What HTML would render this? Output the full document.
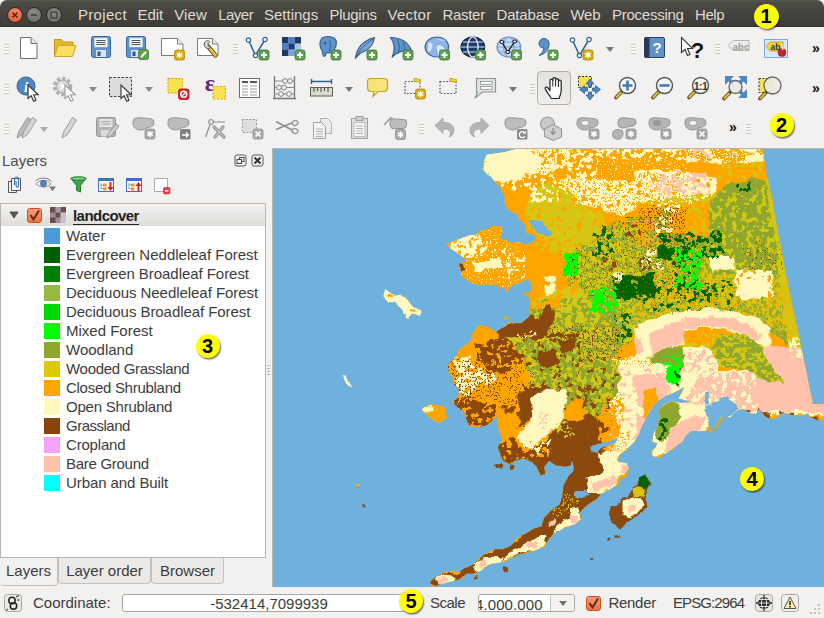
<!DOCTYPE html>
<html><head><meta charset="utf-8"><title>QGIS</title>
<style>
*{box-sizing:border-box}
html,body{margin:0;padding:0}
body{width:824px;height:618px;overflow:hidden;background:#f2f1f0;font-family:"Liberation Sans",sans-serif;font-size:15px;color:#3c3c3c;position:relative}
.abs{position:absolute}
#title{left:0;top:0;width:824px;height:27px;background:linear-gradient(#56554e 0,#4b4a44 3px,#3d3c38 100%);border-radius:7px 7px 0 0;border-bottom:1px solid #33322e}
html{background:#fff}
#title .m{position:absolute;top:5.500px;font-size:15px;line-height:18px;color:#dfdbd2;white-space:nowrap}
.wb{position:absolute;top:6.500px;width:16px;height:16px;border-radius:50%;border:1px solid #2a2925}
.num{position:absolute;border-radius:50%;background:#ffff00;box-shadow:1px 1.500px 1.500px rgba(0,0,0,.55);color:#000;font-weight:bold;text-align:center;font-family:"Liberation Sans",sans-serif}
#tree{left:0;top:203px;width:266px;height:355px;background:#fff;border:1px solid #b8b5b0}
#tree .hd{position:absolute;left:0;top:0;width:264px;height:22px;background:linear-gradient(#f4f3f2,#dedcd9)}
.row{position:absolute;left:43px;height:19px;white-space:nowrap}
.row i{position:absolute;left:0;top:1px;width:16px;height:16px}
.row span{position:absolute;left:22px;top:-1px;line-height:19px;font-size:15px;color:#3c3c3c}
.tab{position:absolute;top:558px;height:26px;border:1px solid #c4c1bc;border-top:none;border-radius:0 0 4px 4px;background:#eceae8;font-size:15px;line-height:25px;color:#3c3c3c;text-align:center}
#map{left:272px;top:148px;width:552px;height:439px;background:#6fb1dd;border-left:1px solid #b9b6b1;border-top:1px solid #b9b6b1;overflow:hidden}
.st{position:absolute;font-size:15px;color:#3c3c3c;white-space:nowrap}
.ic{position:absolute;overflow:visible}
.grip{position:absolute;width:5px;height:11px;background:repeating-linear-gradient(#f2f1f0 0,#f2f1f0 1px,#cfccc7 1px,#cfccc7 2px,#fbfbfa 2px,#fbfbfa 3px)}
.dd{position:absolute;width:0;height:0;border:4px solid transparent;border-top:5px solid #777;border-bottom:none}
.chev{position:absolute;font-size:14px;font-weight:bold;color:#111;line-height:20px}
</style></head>
<body>
<!-- title / menu bar -->
<div id="title" class="abs">
 <div class="wb" style="left:7px;background:radial-gradient(circle at 50% 30%,#f58a66,#df5326)"><svg width="14" height="14" viewBox="0 0 14 14" style="position:absolute;left:0;top:0"><path d="M4.500 4.500l5 5M9.500 4.500l-5 5" stroke="#4a2419" stroke-width="1.500"/></svg></div>
 <div class="wb" style="left:26px;background:radial-gradient(circle at 50% 30%,#8b8a84,#6b6a65)"><svg width="14" height="14" viewBox="0 0 14 14" style="position:absolute;left:0;top:0"><path d="M4 7h6" stroke="#3a3935" stroke-width="1.500"/></svg></div>
 <div class="wb" style="left:46px;background:radial-gradient(circle at 50% 30%,#8b8a84,#6b6a65)"><svg width="14" height="14" viewBox="0 0 14 14" style="position:absolute;left:0;top:0"><rect x="4" y="4" width="6" height="6" fill="none" stroke="#3a3935" stroke-width="1.200"/></svg></div>
 <span class="m" style="left:78px;letter-spacing:0.31px">Project</span>
 <span class="m" style="left:137.4px;letter-spacing:0px">Edit</span>
 <span class="m" style="left:174.2px;letter-spacing:0.15px">View</span>
 <span class="m" style="left:218.2px;letter-spacing:-0.5px">Layer</span>
 <span class="m" style="left:264px;letter-spacing:0px">Settings</span>
 <span class="m" style="left:329.5px;letter-spacing:-0.29px">Plugins</span>
 <span class="m" style="left:387.5px;letter-spacing:0.23px">Vector</span>
 <span class="m" style="left:442.6px;letter-spacing:-0.33px">Raster</span>
 <span class="m" style="left:496.5px;letter-spacing:-0.18px">Database</span>
 <span class="m" style="left:570.5px;letter-spacing:-0.3px">Web</span>
 <span class="m" style="left:611.9px;letter-spacing:-0.24px">Processing</span>
 <span class="m" style="left:695px;letter-spacing:-0.43px">Help</span>
</div>
<div class="num" style="left:753.500px;top:3.500px;width:25px;height:25px;font-size:20px;line-height:25px">1</div>
<div class="num" style="left:769.500px;top:113px;width:24px;height:24px;font-size:20px;line-height:24px">2</div>

<!-- TOOLBARS -->
<div id="toolbars" class="abs" style="left:0;top:0;width:824px;height:148px">
<svg class="ic" style="left:17px;top:36px" width="24" height="24" viewBox="0 0 24 24"><path d="M3.5 1.5h10.5l6 6v15h-16.5z" fill="#fff" stroke="#6e6e6e"/><path d="M14 1.5v6h6" fill="#e9e9e9" stroke="#6e6e6e"/></svg>
<svg class="ic" style="left:53px;top:36px" width="24" height="24" viewBox="0 0 24 24"><path d="M1.5 3.5h7l2 2.5h9.5v13h-18.5z" fill="#e3ba2f" stroke="#c49a17"/><path d="M1.5 20.5l3.5-11h18l-3.5 11z" fill="#f8df62" stroke="#d0a620"/></svg>
<svg class="ic" style="left:89px;top:36px" width="24" height="24" viewBox="0 0 24 24"><rect x="2.5" y="0.5" width="19" height="21" rx="2" fill="#5f91cb" stroke="#3b6ba6"/><rect x="5.5" y="2" width="13" height="9" fill="#f4f4f4" stroke="#c9d3e0" stroke-width=".6"/><path d="M7.5 4.5h9M7.5 6.5h9M7.5 8.5h9" stroke="#555" stroke-width="1"/><rect x="7" y="14" width="10" height="7" fill="#dfe3ea"/><rect x="8.5" y="15.5" width="3" height="4.5" fill="#34568a"/></svg>
<svg class="ic" style="left:125px;top:36px" width="24" height="24" viewBox="0 0 24 24"><g transform="translate(-1,0)"><rect x="2.5" y="0.5" width="19" height="21" rx="2" fill="#5f91cb" stroke="#3b6ba6"/><rect x="5.5" y="2" width="13" height="9" fill="#f4f4f4" stroke="#c9d3e0" stroke-width=".6"/><path d="M7.5 4.5h9M7.5 6.5h9M7.5 8.5h9" stroke="#555" stroke-width="1"/><rect x="7" y="14" width="10" height="7" fill="#dfe3ea"/><rect x="8.5" y="15.5" width="3" height="4.5" fill="#34568a"/></g><g transform="translate(13.5,13.5)"><rect width="10" height="10" rx="2" fill="#5fa052" stroke="#3f7a35" stroke-width=".8"/><path d="M2.5 7.5l5-5" stroke="#fff" stroke-width="2.2"/></g></svg>
<svg class="ic" style="left:160px;top:36px" width="24" height="24" viewBox="0 0 24 24"><path d="M1.5 2.5h16l5.5 5.5v11.5h-21.5z" fill="#fff" stroke="#7a7a7a"/><path d="M17.5 2.5v5.5h5.5" fill="#eee" stroke="#7a7a7a"/><g transform="translate(14.5,14)"><rect x="0" y="0" width="10" height="10" rx="2" fill="#d9ad0e" stroke="#b08a00" stroke-width=".8"/><path d="M5 1.8v6.4M2.2 3.4l5.6 3.2M7.8 3.4l-5.6 3.2" stroke="#fff" stroke-width="1.4"/></g></svg>
<svg class="ic" style="left:196px;top:36px" width="24" height="24" viewBox="0 0 24 24"><path d="M1.5 2.5h15l5.5 5.5v11.5h-20.5z" fill="#fff" stroke="#7a7a7a"/><path d="M16.5 2.5v5.5h5.5" fill="#eee" stroke="#7a7a7a"/><path d="M10 8l9.5 11.5" stroke="#7a5a18" stroke-width="4.4" stroke-linecap="round"/><path d="M10 8l9.5 11.5" stroke="#e9c04a" stroke-width="2.6" stroke-linecap="round"/><path d="M12.5 4.5a4 4 0 1 0 2.5 6.8l-2.6-1 -.6-2.6 2.2-1.9a4 4 0 0 0-1.5-1.3z" fill="#d8d8d8" stroke="#5a5a5a" stroke-width=".9"/></svg>
<svg class="ic" style="left:245px;top:36px" width="24" height="24" viewBox="0 0 24 24"><path d="M3.5 4L10.5 19.5L20 3.5" fill="none" stroke="#2f5f8f" stroke-width="1.5"/><circle cx="3.5" cy="4" r="2.2" fill="#fff" stroke="#2f5f8f" stroke-width="1.2"/><circle cx="20" cy="3.5" r="2.2" fill="#fff" stroke="#2f5f8f" stroke-width="1.2"/><circle cx="10.5" cy="19.5" r="2.2" fill="#fff" stroke="#2f5f8f" stroke-width="1.2"/><g transform="translate(14,14)"><rect x="0" y="0" width="10" height="10" rx="2" fill="#5fa052" stroke="#3f7a35" stroke-width=".8"/><path d="M5 2v6M2 5h6" stroke="#fff" stroke-width="2"/></g></svg>
<svg class="ic" style="left:281px;top:36px" width="24" height="24" viewBox="0 0 24 24"><rect x="1" y="1" width="19" height="19" fill="#a8c4e6"/><rect x="1" y="1" width="6.4" height="6.4" fill="#1d3b69"/><rect x="13.6" y="1" width="6.4" height="6.4" fill="#1d3b69"/><rect x="7.4" y="7.4" width="6.2" height="6.2" fill="#1d3b69"/><rect x="7.4" y="1" width="6.2" height="6.4" fill="#4f7fc0"/><rect x="1" y="7.4" width="6.4" height="6.2" fill="#4f7fc0"/><rect x="1" y="13.6" width="6.4" height="6.4" fill="#1d3b69"/><rect x="7.4" y="13.6" width="6.2" height="6.4" fill="#7fa3d6"/><g transform="translate(14,14)"><rect x="0" y="0" width="10" height="10" rx="2" fill="#5fa052" stroke="#3f7a35" stroke-width=".8"/><path d="M5 2v6M2 5h6" stroke="#fff" stroke-width="2"/></g></svg>
<svg class="ic" style="left:317px;top:36px" width="24" height="24" viewBox="0 0 24 24"><path d="M5 2c3-2 9-2 12 0c3 2 3 7 1 10c-1 2-1 5 .5 7c-2 1.500-4 0-4.500-3c-1.500 1-3.500 1-5 .5c0 2-.5 3.500-2 4c-1.500-1-1.500-4-2-6c-2.500-3-3-9 0-12.500z" fill="#5f91cb" stroke="#2f5f8f" stroke-width="1.1"/><circle cx="8" cy="7" r="1" fill="#1d3b69"/><path d="M12 4c2 3 2 7 0 11" fill="none" stroke="#2f5f8f" stroke-width=".9"/><g transform="translate(14,14)"><rect x="0" y="0" width="10" height="10" rx="2" fill="#5fa052" stroke="#3f7a35" stroke-width=".8"/><path d="M5 2v6M2 5h6" stroke="#fff" stroke-width="2"/></g></svg>
<svg class="ic" style="left:353px;top:36px" width="24" height="24" viewBox="0 0 24 24"><path d="M2.500 22c1-8 6-17 19-20.500c-1 7-6 13-14 15.500z" fill="#7aa3d6" stroke="#2f5f8f" stroke-width="1.1"/><path d="M3 22c3-8 9-14 17-19" fill="none" stroke="#2f5f8f" stroke-width="1"/><g transform="translate(14,14)"><rect x="0" y="0" width="10" height="10" rx="2" fill="#5fa052" stroke="#3f7a35" stroke-width=".8"/><path d="M5 2v6M2 5h6" stroke="#fff" stroke-width="2"/></g></svg>
<svg class="ic" style="left:389px;top:36px" width="24" height="24" viewBox="0 0 24 24"><path d="M1.500 1.500c10 0 18 5 21.500 14c-6-2-14-1-20 6c3-7 3-14-1.500-20z" fill="#5f91cb" stroke="#2f5f8f" stroke-width="1.1"/><path d="M8 3c3 5 3 10 1 15M14 5.500c2 4 2 7 1.500 10.500" fill="none" stroke="#2f5f8f" stroke-width=".9"/><g transform="translate(14,14)"><rect x="0" y="0" width="10" height="10" rx="2" fill="#5fa052" stroke="#3f7a35" stroke-width=".8"/><path d="M5 2v6M2 5h6" stroke="#fff" stroke-width="2"/></g></svg>
<svg class="ic" style="left:425px;top:36px" width="24" height="24" viewBox="0 0 24 24"><g transform="translate(-1,0) scale(1.17,1)"><circle cx="11" cy="11" r="10" fill="#8db4e3" stroke="#3b6ba6" stroke-width="1.2"/><path d="M4 6c3 1 4 3 3 6s-2 4-4 3M11 3c3 2 5 2 8 1M12 9c3 0 5 2 6 5s-2 5-5 5c-2-2-1-4-2-6s0-3 1-4z" fill="#d5e4f6" stroke="none"/></g><g transform="translate(14.5,14)"><rect x="0" y="0" width="10" height="10" rx="2" fill="#5fa052" stroke="#3f7a35" stroke-width=".8"/><path d="M5 2v6M2 5h6" stroke="#fff" stroke-width="2"/></g></svg>
<svg class="ic" style="left:461px;top:36px" width="24" height="24" viewBox="0 0 24 24"><g transform="translate(-1,0) scale(1.17,1)"><circle cx="11" cy="11" r="10" fill="#1d3b69" stroke="#13294a" stroke-width="1.2"/><ellipse cx="11" cy="11" rx="4.500" ry="10" fill="none" stroke="#dfe8f4" stroke-width="1.2"/><path d="M1 11h20M2.500 6h17M2.500 16h17" stroke="#dfe8f4" stroke-width="1.200"/></g><g transform="translate(14.5,14)"><rect x="0" y="0" width="10" height="10" rx="2" fill="#5fa052" stroke="#3f7a35" stroke-width=".8"/><path d="M5 2v6M2 5h6" stroke="#fff" stroke-width="2"/></g></svg>
<svg class="ic" style="left:497px;top:36px" width="24" height="24" viewBox="0 0 24 24"><g transform="translate(-1,0) scale(1.17,1)"><circle cx="11" cy="11" r="10" fill="#c3d8f1" stroke="#5f91cb" stroke-width="1.2"/><ellipse cx="11" cy="11" rx="4.500" ry="10" fill="none" stroke="#7aa3d6" stroke-width="1"/><path d="M1 11h20M2.500 6h17M2.500 16h17" stroke="#7aa3d6" stroke-width="1"/><path d="M5 6l5 10l6-10.500" fill="none" stroke="#222" stroke-width="1.200"/><circle cx="5" cy="6" r="1.600" fill="#fff" stroke="#222"/><circle cx="16" cy="5.500" r="1.600" fill="#fff" stroke="#222"/><circle cx="10" cy="16" r="1.600" fill="#fff" stroke="#222"/></g><g transform="translate(14.5,14)"><rect x="0" y="0" width="10" height="10" rx="2" fill="#5fa052" stroke="#3f7a35" stroke-width=".8"/><path d="M5 2v6M2 5h6" stroke="#fff" stroke-width="2"/></g></svg>
<svg class="ic" style="left:535px;top:36px" width="24" height="24" viewBox="0 0 24 24"><path d="M9 2.500a5 5 0 0 1 5 5.500c0 6-4 10-10 11.500c3-2 5-5 5-7.500a5 5 0 0 1-5-4.500a5 5 0 0 1 5-5z" fill="#5f91cb" stroke="#2f5f8f" stroke-width="1"/><g transform="translate(13,14)"><rect x="0" y="0" width="10" height="10" rx="2" fill="#5fa052" stroke="#3f7a35" stroke-width=".8"/><path d="M5 2v6M2 5h6" stroke="#fff" stroke-width="2"/></g></svg>
<svg class="ic" style="left:569px;top:36px" width="24" height="24" viewBox="0 0 24 24"><path d="M3.5 4L10.5 19.5L20 3.5" fill="none" stroke="#2f5f8f" stroke-width="1.5"/><circle cx="3.5" cy="4" r="2.2" fill="#fff" stroke="#2f5f8f" stroke-width="1.2"/><circle cx="20" cy="3.5" r="2.2" fill="#fff" stroke="#2f5f8f" stroke-width="1.2"/><circle cx="10.5" cy="19.5" r="2.2" fill="#fff" stroke="#2f5f8f" stroke-width="1.2"/><g transform="translate(14,14)"><rect x="0" y="0" width="10" height="10" rx="2" fill="#d9ad0e" stroke="#b08a00" stroke-width=".8"/><path d="M5 1.8v6.4M2.2 3.4l5.6 3.2M7.8 3.4l-5.6 3.2" stroke="#fff" stroke-width="1.4"/></g></svg>
<svg class="ic" style="left:643px;top:36px" width="24" height="24" viewBox="0 0 24 24"><rect x="1.500" y="1.500" width="20" height="20" rx="1.500" fill="#5f91cb" stroke="#2c4468"/><rect x="1.500" y="1.500" width="5" height="20" fill="#263a57"/><text x="14" y="17" style="font-family:'Liberation Sans',sans-serif" font-size="15" font-weight="bold" fill="#fff" text-anchor="middle">?</text></svg>
<svg class="ic" style="left:679px;top:36px" width="24" height="24" viewBox="0 0 24 24"><path d="M2.500 1.500v15l3.500-3 2.500 6 2.500-1-2.500-6h5z" fill="#fff" stroke="#333" stroke-width="1.1"/><text x="18.500" y="21.500" style="font-family:'Liberation Sans',sans-serif" font-size="22" font-weight="bold" fill="#111" text-anchor="middle">?</text></svg>
<svg class="ic" style="left:727px;top:36px" width="24" height="24" viewBox="0 0 24 24"><path d="M1 9.500l5-5h16v10h-16z" fill="#ececec" stroke="#b5b5b5"/><text x="14" y="13.500" style="font-family:'Liberation Sans',sans-serif" font-size="9.500" font-weight="bold" fill="#9a9a9a" text-anchor="middle">abc</text></svg>
<svg class="ic" style="left:764px;top:39px" width="24" height="20" viewBox="0 0 24 20"><rect x=".5" y=".5" width="23" height="18" fill="#dbe8fa" stroke="#7da7e3"/><path d="M2 7.500l4-4.500h13v9h-13z" fill="#f2d53c" stroke="#b99a10" stroke-width=".8"/><text x="11.500" y="11" style="font-family:'Liberation Sans',sans-serif" font-size="8.500" font-weight="bold" fill="#333" text-anchor="middle">ab</text><circle cx="18" cy="13.500" r="4" fill="#c4262e" stroke="#8e161c" stroke-width=".6"/><path d="M17 5c1.500 0 2 4 1.500 6" stroke="#ddd" stroke-width="1.600" fill="none"/></svg>
<svg class="ic" style="left:16px;top:76px" width="26" height="26" viewBox="0 0 26 26"><circle cx="10" cy="10" r="9" fill="#4f86c6" stroke="#2f5f8f"/><text x="10" y="15.500" style="font-family:'Liberation Serif',serif" font-style="italic" font-weight="bold" font-size="15" fill="#fff" text-anchor="middle">i</text><path d="M12 9v13.500l3.200-2.800 2.400 5.500 2.400-1-2.400-5.400h4.600z" fill="#fff" stroke="#333" stroke-width="1.100"/></svg>
<svg class="ic" style="left:52px;top:76px" width="26" height="26" viewBox="0 0 26 26"><circle cx="10.500" cy="10.500" r="8" fill="none" stroke="#b0b0b0" stroke-width="3.500" stroke-dasharray="3.200 2.100"/><circle cx="10.500" cy="10.500" r="6.500" fill="#d9d9d9" stroke="#a0a0a0"/><path d="M8.500 7v7l6-3.500z" fill="#fff"/><path d="M13 10v13.500l3.200-2.800 2.400 5.500 2.400-1-2.400-5.400h4.600z" fill="#fff" stroke="#9a9a9a" stroke-width="1.100" transform="translate(0,-1)"/></svg>
<svg class="ic" style="left:108px;top:76px" width="26" height="26" viewBox="0 0 26 26"><rect x="1.500" y="1.500" width="22" height="19" fill="#dcdcdc" stroke="#444" stroke-dasharray="2.500 1.500"/><path d="M13 9v13.500l3.200-2.800 2.400 5.500 2.400-1-2.400-5.400h4.600z" fill="#fff" stroke="#333" stroke-width="1.100"/></svg>
<svg class="ic" style="left:166px;top:76px" width="24" height="24" viewBox="0 0 24 24"><rect x="2" y="2.500" width="14.500" height="14.500" fill="#f7e24f" stroke="#c9a800" stroke-dasharray="2 1.500"/><rect x="12.500" y="13" width="10.500" height="10.500" rx="2" fill="#d9262c" stroke="#a3161b" stroke-width=".8"/><circle cx="17.750" cy="18.250" r="3" fill="none" stroke="#fff" stroke-width="1.400"/><path d="M15.800 20.200l3.900-3.900" stroke="#fff" stroke-width="1.400"/></svg>
<svg class="ic" style="left:203px;top:76px" width="24" height="24" viewBox="0 0 24 24"><text x="7" y="15" style="font-family:'Liberation Serif',serif" font-size="24" font-weight="bold" fill="#5a2a82" text-anchor="middle">ε</text><rect x="10" y="10.500" width="12.500" height="12.500" fill="#f7e24f" stroke="#c9a800" stroke-dasharray="2 1.500"/></svg>
<svg class="ic" style="left:238px;top:76px" width="24" height="24" viewBox="0 0 24 24"><rect x="1.500" y="2.500" width="20" height="19" fill="#fff" stroke="#6e6e6e"/><path d="M4 6h6M12 6h7" stroke="#555" stroke-width="2"/><path d="M4 10h6M12 10h7M4 13h6M12 13h7M4 16h6M12 16h7M4 19h6M12 19h7" stroke="#999" stroke-width="1"/></svg>
<svg class="ic" style="left:272px;top:76px" width="25" height="24" viewBox="0 0 25 24"><path d="M2.500 0v22M22.500 0v22" stroke="#777" stroke-width="1.300"/><path d="M2.500 5h20M2.500 11.500h20M2.500 18h20" stroke="#888" stroke-width="1"/><path d="M1 22.500h23" stroke="#777" stroke-width="1.500"/><g fill="#f2f2f2" stroke="#777" stroke-width=".9"><circle cx="13" cy="5" r="2.400"/><circle cx="18" cy="5" r="2.400"/><circle cx="7" cy="11.500" r="2.400"/><circle cx="12" cy="11.500" r="2.400"/><circle cx="9" cy="18" r="2.400"/><circle cx="17" cy="18" r="2.400"/></g></svg>
<svg class="ic" style="left:309px;top:76px" width="25" height="24" viewBox="0 0 25 24"><path d="M2.500 3v5M22.500 3v5M2.500 5.500h20" stroke="#2f5f8f" stroke-width="1.400"/><rect x="1.500" y="11.500" width="22" height="8.500" fill="#d7dccf" stroke="#5c6152"/><path d="M5 12v4M8.500 12v3M12 12v4M15.500 12v3M19 12v4" stroke="#444" stroke-width="1"/></svg>
<svg class="ic" style="left:366px;top:76px" width="24" height="24" viewBox="0 0 24 24"><path d="M5 2.500h13a3.500 3.500 0 0 1 3.500 3.500v6a3.500 3.500 0 0 1-3.500 3.500h-6l-5 5 .8-5h-2.800a3.500 3.500 0 0 1-3.500-3.500v-6a3.500 3.500 0 0 1 3.500-3.500z" fill="#f8e57a" stroke="#c9a21c" stroke-width="1.200"/></svg>
<svg class="ic" style="left:403px;top:76px" width="24" height="24" viewBox="0 0 24 24"><rect x="2" y="5.500" width="15" height="12" fill="none" stroke="#555" stroke-dasharray="1.600 1.600" stroke-width="1.200"/><path d="M11 5.500v-3h3l1 1h2.500v2.500z" fill="#f2d53c" stroke="#b99a10" stroke-width=".8"/><g transform="translate(12.5,13)"><rect x="0" y="0" width="10" height="10" rx="2" fill="#d9ad0e" stroke="#b08a00" stroke-width=".8"/><path d="M5 1.8v6.4M2.2 3.4l5.6 3.2M7.8 3.4l-5.6 3.2" stroke="#fff" stroke-width="1.4"/></g></svg>
<svg class="ic" style="left:438px;top:76px" width="24" height="24" viewBox="0 0 24 24"><rect x="2" y="5.500" width="16" height="12" fill="none" stroke="#555" stroke-dasharray="1.600 1.600" stroke-width="1.200"/><path d="M12 5.500v-3h3l1 1h2.500v2.500z" fill="#f2d53c" stroke="#b99a10" stroke-width=".8"/></svg>
<svg class="ic" style="left:472px;top:76px" width="26" height="24" viewBox="0 0 26 24"><path d="M4.500 2.500h19v13.500h-13l-7.500 6 2.500-6h-1z" fill="#dfe3e3" stroke="#8f9595" stroke-width="1.200"/><rect x="8.500" y="5.500" width="11.500" height="2.800" fill="#fff" stroke="#8f9595" stroke-width=".8"/><rect x="8.500" y="10.500" width="11.500" height="2.800" fill="#fff" stroke="#8f9595" stroke-width=".8"/></svg>
<div class="ic" style="left:537px;top:71px;width:34px;height:34px;border:1px solid #b3b0ab;border-radius:4px;background:linear-gradient(#e4e2df,#efeeec)"></div>
<svg class="ic" style="left:543px;top:76px" width="22" height="24" viewBox="0 0 22 24"><path d="M7 12v-7.500a1.400 1.400 0 0 1 2.800 0v-1.500a1.400 1.400 0 0 1 2.800 0v1a1.400 1.400 0 0 1 2.800 0v1.500a1.400 1.400 0 0 1 2.800 0v9c0 4-1.500 5-2 8h-8c-.5-3-5-6-6-10c-.3-1.500 1.500-2 2.500-.8l2.300 3z" fill="#fff" stroke="#222" stroke-width="1.200" stroke-linejoin="round"/><path d="M9.800 4.500v6M12.600 4v6.500M15.400 5.500v5.500" stroke="#222" stroke-width="1"/></svg>
<svg class="ic" style="left:577px;top:75px" width="26" height="26" viewBox="0 0 26 26"><rect x="1.500" y="1.500" width="13" height="11" fill="#f7e24f" stroke="#333" stroke-dasharray="2 1.500"/><g fill="#4f86c6" stroke="#2f5f8f" stroke-width=".8"><path d="M13 4l4 5h-2.500v3h-3v-3h-2.500z"/><path d="M13 25l4-5h-2.500v-3h-3v3h-2.500z"/><path d="M2.500 14.500l5-4v2.500h3v3h-3v2.500z"/><path d="M23.500 14.500l-5-4v2.500h-3v3h3v2.500z"/></g></svg>
<svg class="ic" style="left:613px;top:76px" width="24" height="24" viewBox="0 0 24 24"><path d="M3 21.500l6-6" stroke="#3a3a3a" stroke-width="3.600" stroke-linecap="round"/><path d="M3.300 21.200l4.700-4.700" stroke="#f0c020" stroke-width="2" stroke-linecap="round"/><circle cx="14.500" cy="9.500" r="8" fill="#f4f4f2" stroke="#555" stroke-width="1.400"/><path d="M14.500 4.500v10M9.500 9.500h10" stroke="#3f7ac2" stroke-width="2.600"/></svg>
<svg class="ic" style="left:650px;top:76px" width="24" height="24" viewBox="0 0 24 24"><path d="M3 21.500l6-6" stroke="#3a3a3a" stroke-width="3.600" stroke-linecap="round"/><path d="M3.300 21.200l4.700-4.700" stroke="#f0c020" stroke-width="2" stroke-linecap="round"/><circle cx="14.500" cy="9.500" r="8" fill="#f4f4f2" stroke="#555" stroke-width="1.400"/><path d="M9.500 9.500h10" stroke="#3f7ac2" stroke-width="2.600"/></svg>
<svg class="ic" style="left:686px;top:76px" width="24" height="24" viewBox="0 0 24 24"><path d="M3 21.500l6-6" stroke="#3a3a3a" stroke-width="3.600" stroke-linecap="round"/><path d="M3.300 21.200l4.700-4.700" stroke="#f0c020" stroke-width="2" stroke-linecap="round"/><circle cx="14.500" cy="9.500" r="8" fill="#f4f4f2" stroke="#555" stroke-width="1.400"/><text x="14.500" y="13.500" style="font-family:'Liberation Sans',sans-serif" font-size="10.500" font-weight="bold" fill="#333" text-anchor="middle" letter-spacing="-0.6">1:1</text></svg>
<svg class="ic" style="left:721px;top:75px" width="27" height="26" viewBox="0 0 27 26"><g fill="#4f86c6"><path d="M4 1h9l-3 3 3.500 3.500-2.500 2.500-3.500-3.500-3.500 3.500z"/><path d="M26 1h-9l3 3-3.500 3.500 2.500 2.500 3.500-3.500 3.500 3.500z"/><path d="M26 23h-9l3-3-3.500-3.500 2.500-2.500 3.500 3.500 3.500-3.500z"/></g><path d="M3 23.500l6-6" stroke="#3a3a3a" stroke-width="3.600" stroke-linecap="round"/><path d="M3.300 23.200l4.700-4.700" stroke="#f0c020" stroke-width="2" stroke-linecap="round"/><circle cx="14.500" cy="12" r="6.500" fill="#e9e9e7" fill-opacity=".9" stroke="#666" stroke-width="1.300"/></svg>
<svg class="ic" style="left:757px;top:75px" width="26" height="26" viewBox="0 0 26 26"><rect x="2" y="3.500" width="13" height="14" fill="#f7e24f" stroke="#333" stroke-dasharray="2 1.500"/><path d="M3 23.500l6-6" stroke="#3a3a3a" stroke-width="3.600" stroke-linecap="round"/><path d="M3.300 23.200l4.700-4.700" stroke="#f0c020" stroke-width="2" stroke-linecap="round"/><circle cx="15.500" cy="10.500" r="8.500" fill="#ecebe2" fill-opacity=".9" stroke="#666" stroke-width="1.300"/></svg>
<svg class="ic" style="left:16px;top:116px" width="24" height="24" viewBox="0 0 24 24"><path d="M1 22l1.500-6 9-14.500 4 2.500-9 14.500z" fill="#b9b9b9" stroke="#9c9c9c" stroke-width="1"/><path d="M6 22l1.500-6 9-14.500 4 2.500-9 14.500z" fill="#d6d6d6" stroke="#9c9c9c" stroke-width="1"/></svg>
<svg class="ic" style="left:61px;top:116px" width="18" height="24" viewBox="0 0 18 24"><path d="M1 22l1.500-6 9-14.500 4 2.500-9 14.500z" fill="#d6d6d6" stroke="#9c9c9c" stroke-width="1"/></svg>
<svg class="ic" style="left:95px;top:116px" width="25" height="24" viewBox="0 0 25 24"><rect x="1.500" y="1.500" width="19" height="19" rx="2" fill="#b5b5b5" stroke="#959595"/><rect x="4.500" y="3" width="13" height="8" fill="#e2e2e2"/><path d="M6.500 5.500h9M6.500 8h9" stroke="#a5a5a5"/><rect x="6" y="14" width="10" height="6.500" fill="#dadada"/><path d="M12 22l1-4 8-10 3 2-8 10z" fill="#cfcfcf" stroke="#8c8c8c" stroke-width=".9"/></svg>
<svg class="ic" style="left:132px;top:116px" width="24" height="24" viewBox="0 0 24 24"><path d="M3 2.500c4-2 9 0 13 0s6 1 6 4-3 5-6 5-4 3-8 2.500-7-3-7-6 0-4.500 2-5.500z" fill="#bdbdbd" stroke="#9a9a9a" stroke-width="1.100"/><g transform="translate(13,13)"><rect x="0" y="0" width="10" height="10" rx="2" fill="#a9a9a9" stroke="#8f8f8f" stroke-width=".8"/><path d="M5 1.8v6.4M2.2 3.4l5.6 3.2M7.8 3.4l-5.6 3.2" stroke="#fff" stroke-width="1.4"/></g></svg>
<svg class="ic" style="left:167px;top:116px" width="25" height="24" viewBox="0 0 25 24"><path d="M3 2.500c4-2 9 0 13 0s6 1 6 4-3 5-6 5-4 3-8 2.500-7-3-7-6 0-4.500 2-5.500z" fill="#bdbdbd" stroke="#9a9a9a" stroke-width="1.100"/><g transform="translate(13,13)"><rect width="10.500" height="10.500" rx="1.500" fill="#7f7f7f"/><path d="M2 5.200h4v-2.500l3.300 3.300-3.300 3.300v-2.500h-4z" fill="#fff"/></g></svg>
<svg class="ic" style="left:204px;top:116px" width="24" height="24" viewBox="0 0 24 24"><path d="M1.500 21l5.500-15h14" fill="none" stroke="#8a8a8a" stroke-width="1.200"/><circle cx="7" cy="6" r="2.500" fill="#ddd" stroke="#8a8a8a"/><path d="M10 11l10 10M19 11l-8 10" stroke="#8c8c8c" stroke-width="3.200" stroke-linecap="round"/><path d="M10 11l10 10M19 11l-8 10" stroke="#c4c4c4" stroke-width="1.400" stroke-linecap="round"/></svg>
<svg class="ic" style="left:241px;top:116px" width="24" height="24" viewBox="0 0 24 24"><rect x="1.500" y="3.500" width="14" height="13" fill="#dedede" stroke="#9a9a9a" stroke-dasharray="2 1.500"/><g transform="translate(12,13)"><rect width="10" height="10" rx="2" fill="#a9a9a9" stroke="#8f8f8f" stroke-width=".8"/><path d="M2.5 2.5l5 5M7.5 2.5l-5 5" stroke="#fff" stroke-width="1.6"/></g></svg>
<svg class="ic" style="left:275px;top:116px" width="25" height="24" viewBox="0 0 25 24"><path d="M1 5.500l17 9M1 13.500l17-7" stroke="#8f8f8f" stroke-width="1.600"/><ellipse cx="20" cy="7" rx="3" ry="2.300" fill="none" stroke="#9a9a9a" stroke-width="1.500" transform="rotate(-25 20 7)"/><ellipse cx="20" cy="15" rx="3" ry="2.300" fill="none" stroke="#9a9a9a" stroke-width="1.500" transform="rotate(25 20 15)"/></svg>
<svg class="ic" style="left:312px;top:116px" width="22" height="24" viewBox="0 0 22 24"><path d="M8.500 2.500h7l4 4v11h-11z" fill="#ececec" stroke="#b0b0b0"/><path d="M1.500 6.500h8l4 4v12h-12z" fill="#f4f4f4" stroke="#a0a0a0"/><path d="M4 13h7M4 15.500h7M4 18h7M4 20.500h7" stroke="#b0b0b0"/></svg>
<svg class="ic" style="left:350px;top:116px" width="20" height="24" viewBox="0 0 20 24"><rect x="1.500" y="2.500" width="16" height="20" fill="#e0e0e0" stroke="#a0a0a0"/><rect x="6" y=".5" width="7" height="4" fill="#cfcfcf" stroke="#a0a0a0"/><rect x="4" y="6.500" width="11" height="14" fill="#f6f6f6" stroke="#b0b0b0" stroke-width=".8"/><path d="M6 10h7M6 12.500h7M6 15h7M6 17.500h7" stroke="#b0b0b0"/></svg>
<svg class="ic" style="left:383px;top:116px" width="26" height="24" viewBox="0 0 26 24"><path d="M1 9l7-7.500" stroke="#8a8a8a" stroke-width="1.100"/><path d="M8 2c4 2 8 1 13 1.500c3 0 3 4 2 7s-5 2-8 2-5 1-7-1-1-6 0-9.500z" fill="#bdbdbd" stroke="#9a9a9a" stroke-width="1.100"/><g transform="translate(12.5,13.5)"><rect x="0" y="0" width="10" height="10" rx="2" fill="#a9a9a9" stroke="#8f8f8f" stroke-width=".8"/><path d="M5 1.8v6.4M2.2 3.4l5.6 3.2M7.8 3.4l-5.6 3.2" stroke="#fff" stroke-width="1.4"/></g></svg>
<svg class="ic" style="left:433px;top:116px" width="22" height="24" viewBox="0 0 22 24"><path d="M2 9.500l8-7.500v4.500c7-.5 11 3 11 8 0 3-2 5.500-5 6.500 2.500-3 2.500-8.500-6-8v4.500z" fill="#b5b5b5" stroke="#a0a0a0" stroke-width=".8"/></svg>
<svg class="ic" style="left:469px;top:116px" width="22" height="24" viewBox="0 0 22 24"><path d="M20 9.500l-8-7.500v4.500c-7-.5-11 3-11 8 0 3 2 5.500 5 6.500-2.500-3-2.500-8.500 6-8v4.500z" fill="#b5b5b5" stroke="#a0a0a0" stroke-width=".8"/></svg>
<svg class="ic" style="left:504px;top:116px" width="25" height="24" viewBox="0 0 25 24"><path d="M3 2.500c4-2 9 0 13 0s6 1 6 4-3 5-6 5-4 3-8 2.500-7-3-7-6 0-4.500 2-5.500z" fill="#bdbdbd" stroke="#9a9a9a" stroke-width="1.100"/><g transform="translate(13,13)"><rect width="10.500" height="10.500" rx="1.500" fill="#8a8a8a"/><path d="M7.800 4a3 3 0 1 0 .2 3" fill="none" stroke="#fff" stroke-width="1.300"/><path d="M8.800 1.800v3h-3z" fill="#fff"/></g></svg>
<svg class="ic" style="left:539px;top:116px" width="25" height="25" viewBox="0 0 25 25"><circle cx="8.500" cy="8" r="7" fill="#c9c9c9" stroke="#9a9a9a" stroke-width="1.100"/><path d="M14 8.500l8.500 4.500v8l-8.500 3.500-8.500-4v-7.500z" fill="#cfcfcf" stroke="#9a9a9a" stroke-width="1.100"/><path d="M14 12v6M11.500 15.500l2.500 2.800 2.500-2.800" fill="none" stroke="#8a8a8a" stroke-width="1.200"/></svg>
<svg class="ic" style="left:576px;top:116px" width="24" height="24" viewBox="0 0 24 24"><path d="M3 2.500c4-2 9 0 13 0s6 1 6 4-3 5-6 5-4 3-8 2.500-7-3-7-6 0-4.500 2-5.500z" fill="#b5b5b5" stroke="#9a9a9a" stroke-width="1.100"/><ellipse cx="9" cy="7" rx="4" ry="2.800" fill="#f2f1f0" stroke="#9a9a9a" stroke-width=".9"/><g transform="translate(13,13)"><rect x="0" y="0" width="10" height="10" rx="2" fill="#a9a9a9" stroke="#8f8f8f" stroke-width=".8"/><path d="M5 1.8v6.4M2.2 3.4l5.6 3.2M7.8 3.4l-5.6 3.2" stroke="#fff" stroke-width="1.4"/></g></svg>
<svg class="ic" style="left:612px;top:116px" width="26" height="24" viewBox="0 0 26 24"><path d="M8 2.500c4-1.500 8 0 11 0s5 1 5 3.500-3 4.500-6 4.500-5 2-8 1.500-4-3-4-5 .5-3.500 2-4.500z" fill="#b5b5b5" stroke="#9a9a9a" stroke-width="1.100"/><path d="M2 15c2-2 6-2 8 0s1 5-1 7-6 1.500-7.500-.5 -1-5 .5-6.500z" fill="#b5b5b5" stroke="#9a9a9a" stroke-width="1.100"/><g transform="translate(14,13)"><rect x="0" y="0" width="10" height="10" rx="2" fill="#a9a9a9" stroke="#8f8f8f" stroke-width=".8"/><path d="M5 1.8v6.4M2.2 3.4l5.6 3.2M7.8 3.4l-5.6 3.2" stroke="#fff" stroke-width="1.4"/></g></svg>
<svg class="ic" style="left:648px;top:116px" width="24" height="24" viewBox="0 0 24 24"><path d="M3 2.500c4-2 9 0 13 0s6 1 6 4-3 5-6 5-4 3-8 2.500-7-3-7-6 0-4.500 2-5.500z" fill="#b5b5b5" stroke="#9a9a9a" stroke-width="1.100"/><ellipse cx="9" cy="7" rx="4" ry="2.800" fill="#999" stroke="#9a9a9a" stroke-width=".9"/><g transform="translate(13,13)"><rect x="0" y="0" width="10" height="10" rx="2" fill="#a9a9a9" stroke="#8f8f8f" stroke-width=".8"/><path d="M5 1.8v6.4M2.2 3.4l5.6 3.2M7.8 3.4l-5.6 3.2" stroke="#fff" stroke-width="1.4"/></g></svg>
<svg class="ic" style="left:684px;top:116px" width="24" height="24" viewBox="0 0 24 24"><path d="M3 2.500c4-2 9 0 13 0s6 1 6 4-3 5-6 5-4 3-8 2.500-7-3-7-6 0-4.500 2-5.500z" fill="#b5b5b5" stroke="#9a9a9a" stroke-width="1.100"/><ellipse cx="9" cy="7" rx="4" ry="2.800" fill="#f2f1f0" stroke="#9a9a9a" stroke-width=".9"/><g transform="translate(13,13)"><rect width="10" height="10" rx="2" fill="#a9a9a9" stroke="#8f8f8f" stroke-width=".8"/><path d="M2.5 2.5l5 5M7.5 2.5l-5 5" stroke="#fff" stroke-width="1.6"/></g></svg>
<div class="grip" style="left:4px;top:43px"></div>
<div class="grip" style="left:233px;top:43px"></div>
<div class="grip" style="left:631px;top:43px"></div>
<div class="grip" style="left:715px;top:43px"></div>
<div class="grip" style="left:4px;top:83px"></div>
<div class="grip" style="left:530px;top:83px"></div>
<div class="grip" style="left:4px;top:123px"></div>
<div class="grip" style="left:419px;top:123px"></div>
<div class="grip" style="left:746px;top:123px"></div>
<div class="dd" style="left:606px;top:47px;border-top-color:#777"></div>
<div class="dd" style="left:89px;top:87px;border-top-color:#8a8a8a"></div>
<div class="dd" style="left:145px;top:87px;border-top-color:#8a8a8a"></div>
<div class="dd" style="left:345px;top:87px;border-top-color:#777"></div>
<div class="dd" style="left:509px;top:87px;border-top-color:#777"></div>
<div class="dd" style="left:40px;top:127px;border-top-color:#aaa"></div>
<div class="chev" style="left:812px;top:38px">»</div>
<div class="chev" style="left:812px;top:78px">»</div>
<div class="chev" style="left:729px;top:117px">»</div>
</div><!--TBEND-->

<!-- layers panel -->
<div class="st" style="left:2px;top:152px;font-size:15px;color:#4c4c4c">Layers</div>
<svg class="abs" style="left:234px;top:154px" width="31" height="13" viewBox="0 0 31 13"><rect x="1" y="1" width="11" height="11" rx="2" fill="#f7f6f5" stroke="#555"/><rect x="5.500" y="3.500" width="4.500" height="4" fill="none" stroke="#444" stroke-width="1"/><rect x="3" y="5.500" width="4.500" height="4" fill="#f7f6f5" stroke="#444" stroke-width="1"/><rect x="18" y="1" width="11" height="11" rx="2" fill="#f7f6f5" stroke="#555"/><path d="M20.500 3.500l6 6M26.500 3.500l-6 6" stroke="#333" stroke-width="2"/></svg>
<svg class="abs" style="left:6px;top:175px" width="170" height="20" viewBox="0 0 170 20">
 <path d="M2.500 6.500h8v11h-8z" fill="#f4f4f4" stroke="#555"/><path d="M5.500 3.500h9v12h-9z" fill="#fafafa" stroke="#555"/><path d="M8.500 10v-6a2 2 0 0 1 4 0v7a1.200 1.200 0 0 1-2.400 0v-5" fill="none" stroke="#3f7ac2" stroke-width="1.200"/>
 <path d="M30 9c4-5 11-5 15 0c-4 4-11 4-15 0z" fill="#eef2f7" stroke="#8a8f98" stroke-width="1"/><circle cx="37.500" cy="8.500" r="3" fill="#4f86c6" stroke="#2f5f8f" stroke-width=".8"/><path d="M29.500 6c4-4 12-4 16 .5" fill="none" stroke="#777" stroke-width="1"/><path d="M43 11.500h7l-3.500 4.500z" fill="#777"/>
 <path d="M65 3.500c0-2 15-2 15 0l-5.500 7v6.500l-4 -1.500v-5z" fill="#3aa84a" stroke="#1f7a2d" stroke-width="1"/><ellipse cx="72.500" cy="3.500" rx="7.500" ry="1.600" fill="#7fd08a" stroke="#1f7a2d" stroke-width=".8"/>
 <g transform="translate(92,3)"><rect x=".5" y=".5" width="15" height="13" fill="#fff" stroke="#3f6fc4"/><rect x=".5" y=".5" width="15" height="2.500" fill="#3f6fc4"/><path d="M3 5v6M3 7h2M3 10.500h2" stroke="#888" stroke-width=".8"/><rect x="5" y="5.500" width="3.500" height="3" fill="#f7941d"/><rect x="5" y="9.500" width="3.500" height="3" fill="#f7941d"/><path d="M11.500 4v5h-2l3 4 3-4h-2v-5z" fill="#e01b1b"/></g>
 <g transform="translate(120,3)"><rect x=".5" y=".5" width="15" height="13" fill="#fff" stroke="#3f6fc4"/><rect x=".5" y=".5" width="15" height="2.500" fill="#3f6fc4"/><path d="M3 5v6M3 7h2M3 10.500h2" stroke="#888" stroke-width=".8"/><rect x="5" y="5.500" width="3.500" height="3" fill="#f7941d"/><rect x="5" y="9.500" width="3.500" height="3" fill="#f7941d"/><path d="M11.500 13v-5h-2l3-4 3 4h-2v5z" fill="#e01b1b"/></g>
 <g transform="translate(148,3)"><path d="M.5.500h13v13h-13z" fill="#fdfdfd" stroke="#aaa"/><rect x="9.500" y="9.500" width="6.500" height="6.500" rx="1.200" fill="#e8434a" stroke="#c1272d" stroke-width=".6"/><path d="M11 12.750h3.500" stroke="#fff" stroke-width="1.500"/></g>
</svg>
<div class="abs" style="left:267px;top:363px;width:3px;height:12px;background:repeating-linear-gradient(#f2f1f0 0,#f2f1f0 2px,#b9b6b1 2px,#b9b6b1 3px)"></div>
<div id="tree" class="abs">
 <div class="hd"></div>
 <svg class="abs" style="left:8px;top:7px" width="10" height="8" viewBox="0 0 10 8"><path d="M1 1h8l-4 6z" fill="#5a5a5a" stroke="#3a3a3a" stroke-width=".8"/></svg>
 <div class="abs" style="left:26px;top:4px;width:15px;height:15px;border:1px solid #c8511f;border-radius:3px;background:linear-gradient(#f79b76,#ee7447)"><svg width="13" height="13" viewBox="0 0 13 13" style="position:absolute;left:0;top:0"><path d="M2.500 6l3 4.500 5.500-9" fill="none" stroke="#5a2a16" stroke-width="2"/></svg></div>
 <svg class="abs" style="left:49px;top:3px" width="16" height="16" viewBox="0 0 16 16"><rect width="16" height="16" fill="#9c8d96"/><rect x="0" y="0" width="5.500" height="5.500" fill="#6b4b47"/><rect x="10.500" y="0" width="5.500" height="5.500" fill="#6b4b47"/><rect x="5.500" y="5.500" width="5" height="5" fill="#6b4b47"/><rect x="0" y="10.500" width="5.500" height="5.500" fill="#6b4b47"/><rect x="5.500" y="0" width="5" height="5.500" fill="#a498a8"/><rect x="10.500" y="5.500" width="5.500" height="10.500" fill="#c9c0c6"/></svg>
 <span class="abs" style="left:72px;top:2px;font-weight:bold;font-size:15px;color:#222;line-height:19px;letter-spacing:-0.55px;border-bottom:1.500px solid #222;height:18.500px">landcover</span>
 <div class="row" style="top:23px"><i style="background:#4a9bd8"></i><span>Water</span></div>
 <div class="row" style="top:42px"><i style="background:#005f00"></i><span>Evergreen Neddleleaf Forest</span></div>
 <div class="row" style="top:61px"><i style="background:#007f00"></i><span style="letter-spacing:-0.05px">Evergreen Broadleaf Forest</span></div>
 <div class="row" style="top:80px"><i style="background:#96bb43"></i><span style="letter-spacing:-0.05px">Deciduous Needleleaf Forest</span></div>
 <div class="row" style="top:99px"><i style="background:#00d800"></i><span style="letter-spacing:-0.06px">Deciduous Broadleaf Forest</span></div>
 <div class="row" style="top:118px"><i style="background:#00ff00"></i><span>Mixed Forest</span></div>
 <div class="row" style="top:137px"><i style="background:#8fa72e"></i><span>Woodland</span></div>
 <div class="row" style="top:156px"><i style="background:#dcca00"></i><span style="letter-spacing:-0.3px">Wooded Grassland</span></div>
 <div class="row" style="top:175px"><i style="background:#ffa500"></i><span style="letter-spacing:-0.28px">Closed Shrubland</span></div>
 <div class="row" style="top:194px"><i style="background:#fff8be"></i><span style="letter-spacing:-0.22px">Open Shrubland</span></div>
 <div class="row" style="top:213px"><i style="background:#8b4307"></i><span style="letter-spacing:-0.5px">Grassland</span></div>
 <div class="row" style="top:232px"><i style="background:#f5a2f8"></i><span style="letter-spacing:-0.19px">Cropland</span></div>
 <div class="row" style="top:251px"><i style="background:#ffc2ab"></i><span style="letter-spacing:-0.28px">Bare Ground</span></div>
 <div class="row" style="top:270px"><i style="background:#00ffff"></i><span style="letter-spacing:-0.08px">Urban and Built</span></div>
</div>
<div class="num" style="left:195.500px;top:334px;width:24px;height:24px;font-size:20px;line-height:24px">3</div>
<div class="tab" style="left:0;width:58px;height:28px;background:#f2f1f0;border-left:none">Layers</div>
<div class="tab" style="left:58px;width:93px">Layer order</div>
<div class="tab" style="left:151px;width:73px">Browser</div>

<!-- map -->
<div id="map" class="abs">
<!--MAPSTART--><svg width="552" height="440" viewBox="0 0 552 440" style="position:absolute;left:-1px;top:-1px">
<defs>
<clipPath id="landclip"><polygon points="244.7,0.5 490.2,0.5 517.2,144 527.7,192 540.8,256 552,256 552,272.6 545.8,272.6 538,268.7 536.1,264.9 530.2,267.8 518.6,266.8 510.8,264.9 505,269.7 497.2,270.7 492.3,267.8 487.5,261 483.6,265.8 477.8,264.9 471.9,261 466.1,261.9 460.3,266.8 458.3,269.7 452.5,268.7 449.6,271.7 445.7,279.4 441.8,285.3 437,282.3 427.3,283.3 419.5,282.3 413.7,287.2 410.7,292.9 402.9,298.7 395.1,304.6 387.4,309.4 380.6,308.5 379.6,303.6 383.5,299.7 385.4,294.9 380.6,293.9 381.5,286.1 385.4,278.3 388.3,270.6 386.4,262.8 391.3,257 399,253.1 408.7,255 419.4,254.1 406.8,250.2 409.7,245.3 412.6,238.5 402.9,244.3 393.2,248.2 385.4,253.1 379.6,259.9 374.7,268.6 369.9,278.3 367,286.1 362.1,293.9 356.3,299.7 347.5,306.5 344.6,311.4 346.6,314.3 354.3,315.3 357.3,321.1 355.3,326.9 348.5,330.8 345.6,338.6 344.6,337 336.9,341.8 329.1,345.7 325.2,350.6 317.4,355.4 311.6,360.3 307.3,364.9 309.8,369.7 303.7,375.8 291.6,380.6 281.8,385.5 275.8,392.8 272.1,398.8 260,403.7 247.8,406.1 238.1,411 228.4,414.6 218.7,415.8 210.2,421.9 202.9,425.6 194.4,425.6 189.6,430.4 182.3,432.8 167.7,436.5 160.4,438.9 158,434.1 161.6,430.4 170.1,425.6 179.9,423.1 187.1,424.3 193.2,419.5 200.5,417.1 206.6,411 213.9,404.9 222.4,401.3 230.9,401.3 239.4,397.6 244.2,390.3 253.9,385.5 262.4,380.6 269.7,378.2 272.1,369.7 279.4,362.4 287.9,356.4 290.3,347.9 291.6,336.9 296.4,328.4 301.3,323.6 301.3,316.3 294,318.7 284.3,317.5 277,312.6 272.1,318.7 273.3,326 268.5,327.2 264.8,318.7 260,313.9 251.5,310.2 243,312.6 238.1,316.3 230.9,312.6 228.4,306.6 226,299.3 229.6,292 227.9,312.1 228.9,305.7 226,300.8 228.9,295 230.9,289.1 227,283.3 225,273.6 226,267.8 220.2,272.6 214.3,277.5 204.6,279.4 196.9,277.5 193.9,269.7 192,263.9 185.2,259 180.3,254.2 186.2,248.3 187.1,240.6 181.3,235.7 179.4,227.9 175.5,222.1 176.5,215.3 182.3,210.5 186.2,203.7 192,197.8 197.8,192 190.3,202.1 192.3,198.6 197.1,194.7 199.1,187.9 203,181.1 207.8,177.2 214.6,178.2 219.5,181.1 224.3,184 228.2,181.1 234.1,178.2 237,173.3 241.8,175.3 249.6,175.3 253.5,171.4 258.3,166.5 257.4,161.7 258.3,155.8 257.4,149 253.5,148.1 251.5,144.2 257.4,145.1 260.3,140.3 259.3,135.4 256.4,131.5 250.6,133.5 245.7,135.4 237.9,139.3 235,144.2 232.1,138.3 229.2,141.3 224.3,137.4 215.6,136.4 206.9,137.4 200.1,135.4 195.2,131.5 189.4,127.7 188.4,120.9 186.5,116 194.2,113.1 191.3,109.2 184.5,104.3 179.7,101.4 173.8,96 181.6,93.3 189.4,90.3 197.1,87.4 204.9,86.5 207.8,82.6 214.6,81.6 219.5,78.7 226.3,77.7 230.2,78.7 230.2,83.5 228.2,89.4 234.1,92.3 239.9,95.2 245.7,93.3 251.5,96.2 256.4,96.2 259.3,93.3 262.2,94.2 263.2,89.4 260.3,85.5 255.4,86.5 253.5,81.6 251.5,76.7 247.7,70.9 245.7,70.9 246.7,67 240.9,65.1 235,60.2 233.1,53.4 232.1,46.6 228.2,39.8 223.4,35 219.5,29.1 213.7,25.3 211.1,21 207.8,20.4 211.7,19.4 211.7,13.6 214.6,6.8 232.1,4.3 244.7,1" fill="#000"/></clipPath>
<filter id="rag" x="-5%" y="-5%" width="110%" height="110%"><feTurbulence type="fractalNoise" baseFrequency="0.09" numOctaves="3" seed="7" result="t"/><feDisplacementMap in="SourceGraphic" in2="t" scale="9" xChannelSelector="R" yChannelSelector="G"/></filter>
<filter id="rag2" x="-5%" y="-5%" width="110%" height="110%"><feTurbulence type="fractalNoise" baseFrequency="0.25" numOctaves="2" seed="3" result="t"/><feDisplacementMap in="SourceGraphic" in2="t" scale="3" xChannelSelector="R" yChannelSelector="G"/></filter>
<filter id="cl50" x="-5%" y="-5%" width="110%" height="110%" color-interpolation-filters="sRGB"><feTurbulence type="fractalNoise" baseFrequency="0.06" numOctaves="3" seed="21" result="t"/><feColorMatrix in="t" type="matrix" values="0 0 0 0 0  0 0 0 0 0  0 0 0 0 0  30 0 0 0 -15" result="m"/><feTurbulence type="fractalNoise" baseFrequency="0.09" numOctaves="3" seed="7" result="d"/><feDisplacementMap in="SourceGraphic" in2="d" scale="9" xChannelSelector="R" yChannelSelector="G" result="sg"/><feComposite in="sg" in2="m" operator="in"/></filter>
<filter id="cl50b" x="-5%" y="-5%" width="110%" height="110%" color-interpolation-filters="sRGB"><feTurbulence type="fractalNoise" baseFrequency="0.06" numOctaves="3" seed="51" result="t"/><feColorMatrix in="t" type="matrix" values="0 0 0 0 0  0 0 0 0 0  0 0 0 0 0  30 0 0 0 -15" result="m"/><feTurbulence type="fractalNoise" baseFrequency="0.09" numOctaves="3" seed="7" result="d"/><feDisplacementMap in="SourceGraphic" in2="d" scale="9" xChannelSelector="R" yChannelSelector="G" result="sg"/><feComposite in="sg" in2="m" operator="in"/></filter>
<filter id="md20" x="-5%" y="-5%" width="110%" height="110%" color-interpolation-filters="sRGB"><feTurbulence type="fractalNoise" baseFrequency="0.2" numOctaves="2" seed="33" result="t"/><feColorMatrix in="t" type="matrix" values="0 0 0 0 0  0 0 0 0 0  0 0 0 0 0  30 0 0 0 -18.3" result="m"/><feTurbulence type="fractalNoise" baseFrequency="0.09" numOctaves="3" seed="7" result="d"/><feDisplacementMap in="SourceGraphic" in2="d" scale="9" xChannelSelector="R" yChannelSelector="G" result="sg"/><feComposite in="sg" in2="m" operator="in"/></filter>
<filter id="md35" x="-5%" y="-5%" width="110%" height="110%" color-interpolation-filters="sRGB"><feTurbulence type="fractalNoise" baseFrequency="0.2" numOctaves="2" seed="32" result="t"/><feColorMatrix in="t" type="matrix" values="0 0 0 0 0  0 0 0 0 0  0 0 0 0 0  30 0 0 0 -16.5" result="m"/><feTurbulence type="fractalNoise" baseFrequency="0.09" numOctaves="3" seed="7" result="d"/><feDisplacementMap in="SourceGraphic" in2="d" scale="9" xChannelSelector="R" yChannelSelector="G" result="sg"/><feComposite in="sg" in2="m" operator="in"/></filter>
<filter id="md50" x="-5%" y="-5%" width="110%" height="110%" color-interpolation-filters="sRGB"><feTurbulence type="fractalNoise" baseFrequency="0.2" numOctaves="2" seed="31" result="t"/><feColorMatrix in="t" type="matrix" values="0 0 0 0 0  0 0 0 0 0  0 0 0 0 0  30 0 0 0 -15" result="m"/><feTurbulence type="fractalNoise" baseFrequency="0.09" numOctaves="3" seed="7" result="d"/><feDisplacementMap in="SourceGraphic" in2="d" scale="9" xChannelSelector="R" yChannelSelector="G" result="sg"/><feComposite in="sg" in2="m" operator="in"/></filter>
<filter id="sp10" x="-5%" y="-5%" width="110%" height="110%" color-interpolation-filters="sRGB"><feTurbulence type="fractalNoise" baseFrequency="0.55" numOctaves="2" seed="44" result="t"/><feColorMatrix in="t" type="matrix" values="0 0 0 0 0  0 0 0 0 0  0 0 0 0 0  30 0 0 0 -19.8" result="m"/><feTurbulence type="fractalNoise" baseFrequency="0.09" numOctaves="3" seed="7" result="d"/><feDisplacementMap in="SourceGraphic" in2="d" scale="9" xChannelSelector="R" yChannelSelector="G" result="sg"/><feComposite in="sg" in2="m" operator="in"/></filter>
<filter id="sp20" x="-5%" y="-5%" width="110%" height="110%" color-interpolation-filters="sRGB"><feTurbulence type="fractalNoise" baseFrequency="0.55" numOctaves="2" seed="43" result="t"/><feColorMatrix in="t" type="matrix" values="0 0 0 0 0  0 0 0 0 0  0 0 0 0 0  30 0 0 0 -18" result="m"/><feTurbulence type="fractalNoise" baseFrequency="0.09" numOctaves="3" seed="7" result="d"/><feDisplacementMap in="SourceGraphic" in2="d" scale="9" xChannelSelector="R" yChannelSelector="G" result="sg"/><feComposite in="sg" in2="m" operator="in"/></filter>
<filter id="sp35" x="-5%" y="-5%" width="110%" height="110%" color-interpolation-filters="sRGB"><feTurbulence type="fractalNoise" baseFrequency="0.55" numOctaves="2" seed="42" result="t"/><feColorMatrix in="t" type="matrix" values="0 0 0 0 0  0 0 0 0 0  0 0 0 0 0  30 0 0 0 -16.5" result="m"/><feTurbulence type="fractalNoise" baseFrequency="0.09" numOctaves="3" seed="7" result="d"/><feDisplacementMap in="SourceGraphic" in2="d" scale="9" xChannelSelector="R" yChannelSelector="G" result="sg"/><feComposite in="sg" in2="m" operator="in"/></filter>
</defs>
<rect width="552" height="440" fill="#6fb1dd"/>
<g filter="url(#rag2)">
<polygon points="244.7,0.5 490.2,0.5 517.2,144 527.7,192 540.8,256 552,256 552,272.6 545.8,272.6 538,268.7 536.1,264.9 530.2,267.8 518.6,266.8 510.8,264.9 505,269.7 497.2,270.7 492.3,267.8 487.5,261 483.6,265.8 477.8,264.9 471.9,261 466.1,261.9 460.3,266.8 458.3,269.7 452.5,268.7 449.6,271.7 445.7,279.4 441.8,285.3 437,282.3 427.3,283.3 419.5,282.3 413.7,287.2 410.7,292.9 402.9,298.7 395.1,304.6 387.4,309.4 380.6,308.5 379.6,303.6 383.5,299.7 385.4,294.9 380.6,293.9 381.5,286.1 385.4,278.3 388.3,270.6 386.4,262.8 391.3,257 399,253.1 408.7,255 419.4,254.1 406.8,250.2 409.7,245.3 412.6,238.5 402.9,244.3 393.2,248.2 385.4,253.1 379.6,259.9 374.7,268.6 369.9,278.3 367,286.1 362.1,293.9 356.3,299.7 347.5,306.5 344.6,311.4 346.6,314.3 354.3,315.3 357.3,321.1 355.3,326.9 348.5,330.8 345.6,338.6 344.6,337 336.9,341.8 329.1,345.7 325.2,350.6 317.4,355.4 311.6,360.3 307.3,364.9 309.8,369.7 303.7,375.8 291.6,380.6 281.8,385.5 275.8,392.8 272.1,398.8 260,403.7 247.8,406.1 238.1,411 228.4,414.6 218.7,415.8 210.2,421.9 202.9,425.6 194.4,425.6 189.6,430.4 182.3,432.8 167.7,436.5 160.4,438.9 158,434.1 161.6,430.4 170.1,425.6 179.9,423.1 187.1,424.3 193.2,419.5 200.5,417.1 206.6,411 213.9,404.9 222.4,401.3 230.9,401.3 239.4,397.6 244.2,390.3 253.9,385.5 262.4,380.6 269.7,378.2 272.1,369.7 279.4,362.4 287.9,356.4 290.3,347.9 291.6,336.9 296.4,328.4 301.3,323.6 301.3,316.3 294,318.7 284.3,317.5 277,312.6 272.1,318.7 273.3,326 268.5,327.2 264.8,318.7 260,313.9 251.5,310.2 243,312.6 238.1,316.3 230.9,312.6 228.4,306.6 226,299.3 229.6,292 227.9,312.1 228.9,305.7 226,300.8 228.9,295 230.9,289.1 227,283.3 225,273.6 226,267.8 220.2,272.6 214.3,277.5 204.6,279.4 196.9,277.5 193.9,269.7 192,263.9 185.2,259 180.3,254.2 186.2,248.3 187.1,240.6 181.3,235.7 179.4,227.9 175.5,222.1 176.5,215.3 182.3,210.5 186.2,203.7 192,197.8 197.8,192 190.3,202.1 192.3,198.6 197.1,194.7 199.1,187.9 203,181.1 207.8,177.2 214.6,178.2 219.5,181.1 224.3,184 228.2,181.1 234.1,178.2 237,173.3 241.8,175.3 249.6,175.3 253.5,171.4 258.3,166.5 257.4,161.7 258.3,155.8 257.4,149 253.5,148.1 251.5,144.2 257.4,145.1 260.3,140.3 259.3,135.4 256.4,131.5 250.6,133.5 245.7,135.4 237.9,139.3 235,144.2 232.1,138.3 229.2,141.3 224.3,137.4 215.6,136.4 206.9,137.4 200.1,135.4 195.2,131.5 189.4,127.7 188.4,120.9 186.5,116 194.2,113.1 191.3,109.2 184.5,104.3 179.7,101.4 173.8,96 181.6,93.3 189.4,90.3 197.1,87.4 204.9,86.5 207.8,82.6 214.6,81.6 219.5,78.7 226.3,77.7 230.2,78.7 230.2,83.5 228.2,89.4 234.1,92.3 239.9,95.2 245.7,93.3 251.5,96.2 256.4,96.2 259.3,93.3 262.2,94.2 263.2,89.4 260.3,85.5 255.4,86.5 253.5,81.6 251.5,76.7 247.7,70.9 245.7,70.9 246.7,67 240.9,65.1 235,60.2 233.1,53.4 232.1,46.6 228.2,39.8 223.4,35 219.5,29.1 213.7,25.3 211.1,21 207.8,20.4 211.7,19.4 211.7,13.6 214.6,6.8 232.1,4.3 244.7,1" fill="#ffa500"/>
</g>
<g clip-path="url(#landclip)">
<g filter="url(#rag)">
<polygon points="209.3,-2.3 295.6,-2.3 297.9,9.3 291,19.8 274.6,25.2 256,27.5 242,32.6 228,35 209.3,28" fill="#fff8be"/>
</g>
<g filter="url(#md50)">
<polygon points="249,3.5 289.8,2.3 291,16.3 253.6,17.5" fill="#ffa500"/>
</g>
<g filter="url(#sp20)">
<polygon points="209.3,-2.3 295.6,-2.3 295.6,28 209.3,32.6" fill="#ffa500"/>
</g>
<g filter="url(#md50)">
<polygon points="294.4,-2.3 414.5,-2.3 414.5,11.2 294.4,11.2" fill="#fff8be"/>
<polygon points="294.4,10.5 327.1,10.5 325.9,30.3 295.6,30.3" fill="#fff8be"/>
</g>
<g filter="url(#sp10)">
<polygon points="325.9,10.5 414.5,10.5 414.5,29.1 325.9,30.3" fill="#fff8be"/>
</g>
<g filter="url(#cl50)">
<polygon points="413.5,-2.3 491.6,-2.3 493.9,14.5 444.9,15.4 414.6,14" fill="#fff8be"/>
</g>
<g filter="url(#sp35)">
<polygon points="413.5,-2.3 491.6,-2.3 493.9,14.5 414.6,14" fill="#fff8be"/>
</g>
<g filter="url(#md50)">
<polygon points="420.5,-1.2 439.1,-1.2 437.9,9.8 421.6,10.5" fill="#ffc3ab"/>
<polygon points="455.4,3.5 467.1,3.5 466.4,12.1 456.1,12.1" fill="#ffc3ab"/>
</g>
<g filter="url(#md35)">
<polygon points="444.9,14.5 493.9,14.5 495.1,31.5 477.6,30.3 456.6,37.3 444.9,30.3" fill="#d4c712"/>
</g>
<g filter="url(#rag)">
<polygon points="281.6,32.6 304.9,29.1 325.9,31.5 349.2,32.2 377.2,31.5 412.2,26.1 412.2,54.8 391.2,58.3 367.9,61.8 349.2,66.4 325.9,61.8 304.9,57.1 288.6,51.3" fill="#fff8be"/>
<polygon points="363.3,22.8 396,22.1 426.3,25.6 444.9,30.3 442.6,46.6 426.3,54.8 403,56.4 382,55.5 363.3,57.1" fill="#fff8be"/>
</g>
<g filter="url(#md20)">
<polygon points="281.6,29.1 412.2,25.6 412.2,58.3 349.2,66.4 304.9,57.1" fill="#ffa500"/>
<polygon points="363.3,22.8 444.9,23.3 444.9,56.4 363.3,57.1" fill="#ffa500"/>
</g>
<g filter="url(#sp20)">
<polygon points="281.6,29.1 412.2,25.6 412.2,58.3 349.2,66.4 304.9,57.1" fill="#ffa500"/>
</g>
<g filter="url(#md50)">
<polygon points="389,24.5 434.4,23.3 436.8,45.5 396,49.4 382,42" fill="#ffc3ab"/>
</g>
<g filter="url(#sp35)">
<polygon points="377.2,32.6 412.2,30.3 412.2,43.1 379.6,43.1" fill="#ffc3ab"/>
</g>
<g filter="url(#rag)">
<polygon points="253.6,58.3 263,42 277,32.6 291,44.3 304.9,58.3 328.3,67.6 334.1,81.6 321.3,95.6 300.3,103.8 281.6,100.3 266.5,86.3 254.8,72.3" fill="#d4c712"/>
</g>
<g filter="url(#md35)">
<polygon points="251.3,30.3 288.6,26.8 309.6,58.3 337.6,67.6 339.9,100.3 297.9,111.9 267.6,104.9 252.5,69.9" fill="#d4c712"/>
</g>
<g filter="url(#md20)">
<polygon points="251.3,32.6 335.3,32.6 335.3,104.9 251.3,104.9" fill="#ffa500"/>
</g>
<g filter="url(#md50)">
<polygon points="257.1,43.8 286.3,43.1 287.5,54.1 258.3,54.8" fill="#fff8be"/>
</g>
<g filter="url(#md35)">
<polygon points="228,23.3 281.6,23.3 281.6,44.3 228,42" fill="#fff8be"/>
</g>
<g filter="url(#md20)">
<polygon points="228,104.9 253.6,103.8 254.1,130.6 228,131.7" fill="#fff8be"/>
</g>
<g filter="url(#rag)">
<polygon points="272.3,128.7 284.4,128.2 285.1,146.9 272.8,146.9" fill="#fff8be"/>
<polygon points="295.6,149.2 293.3,116.6 302.6,102.6 321.3,93.3 332.9,79.3 349.2,70.4 372.6,65.7 412.2,61.1 412.2,149.2" fill="#8fa72e"/>
<polygon points="437.9,53.6 456.6,37.3 477.6,30.3 493.9,32.2 500.9,69.9 510.2,111.9 517.2,149.2 363.3,149.2 363.3,97.9 396,93.3 421.6,90.9 437.9,76.9" fill="#8fa72e"/>
<polygon points="304.9,127.3 412.2,127.3 412.2,167 386.5,169.3 365.6,176.3 358.6,190.3 339.9,208.9 325.9,201.9 304.9,160" fill="#8fa72e"/>
<polygon points="363.3,127.3 519.6,127.3 528.9,190.3 517.2,197.3 489.2,178.6 461.3,167 433.3,164.6 403,170.5 382,182.1 363.3,195" fill="#8fa72e"/>
<polygon points="493.4,29.8 507.9,28.4 521.9,130.6 507.9,130.6 500.4,76.9" fill="#d4c712"/>
<polygon points="505.6,129.7 519.6,129.7 531.2,201.9 517.2,201.9" fill="#d4c712"/>
</g>
<g filter="url(#md50)">
<polygon points="295.6,149.2 293.3,116.6 302.6,102.6 321.3,93.3 332.9,79.3 349.2,70.4 372.6,65.7 412.2,61.1 412.2,149.2" fill="#d4c712"/>
</g>
<g filter="url(#sp35)">
<polygon points="295.6,149.2 293.3,116.6 302.6,102.6 321.3,93.3 332.9,79.3 349.2,70.4 372.6,65.7 412.2,61.1 412.2,149.2" fill="#d4c712"/>
</g>
<g filter="url(#md50)">
<polygon points="363.3,53.6 437.9,46.6 437.9,149.2 363.3,149.2" fill="#d4c712"/>
</g>
<g filter="url(#sp35)">
<polygon points="363.3,53.6 437.9,46.6 437.9,149.2 363.3,149.2" fill="#d4c712"/>
</g>
<g filter="url(#md35)">
<polygon points="435.6,46.6 498.6,30.3 517.2,149.2 435.6,149.2" fill="#d4c712"/>
</g>
<g filter="url(#md50)">
<polygon points="304.9,127.3 412.2,127.3 412.2,167 358.6,190.3 339.9,208.9 304.9,160" fill="#d4c712"/>
</g>
<g filter="url(#sp35)">
<polygon points="304.9,127.3 412.2,127.3 412.2,167 358.6,190.3 339.9,208.9 304.9,160" fill="#d4c712"/>
</g>
<g filter="url(#md50)">
<polygon points="363.3,127.3 519.6,127.3 528.9,190.3 461.3,167 403,170.5 363.3,195" fill="#d4c712"/>
</g>
<g filter="url(#sp35)">
<polygon points="363.3,127.3 519.6,127.3 528.9,190.3 461.3,167 403,170.5 363.3,195" fill="#d4c712"/>
</g>
<g filter="url(#sp10)">
<polygon points="295.6,149.2 293.3,116.6 302.6,102.6 321.3,93.3 332.9,79.3 349.2,70.4 372.6,65.7 412.2,61.1 412.2,149.2" fill="#ffa500"/>
</g>
<g filter="url(#cl50)">
<polygon points="363.3,53.6 437.9,53.6 437.9,93.3 363.3,97.9" fill="#ffa500"/>
</g>
<g filter="url(#sp35)">
<polygon points="363.3,53.6 437.9,53.6 437.9,93.3 363.3,97.9" fill="#ffa500"/>
</g>
<g filter="url(#md50)">
<polygon points="330.6,66.4 372.6,64.1 412.2,57.1 412.2,69.9 377.2,76.9 349.2,79.3 332.9,79.3" fill="#ffa500"/>
</g>
<g filter="url(#sp20)">
<polygon points="363.3,127.3 519.6,127.3 528.9,190.3 363.3,195" fill="#ffa500"/>
</g>
<g filter="url(#md50)">
<polygon points="381.5,69.5 401.1,68.1 402,84.4 382.5,85.3" fill="#fff8be"/>
<polygon points="393.2,56 405.8,55.5 406.2,68.1 393.6,68.1" fill="#fff8be"/>
</g>
<g filter="url(#rag)">
<polygon points="437.9,108.4 461.3,107.7 461.7,121.7 438.4,121.7" fill="#fff8be"/>
<polygon points="463.6,122.4 499.7,121.7 500.9,149.2 464.8,149.2" fill="#fff8be"/>
</g>
<g filter="url(#md20)">
<polygon points="463.6,122.4 499.7,121.7 500.9,149.2 464.8,149.2" fill="#ffa500"/>
</g>
<g filter="url(#md50)">
<polygon points="368,102.6 391.3,102.1 391.8,121.7 368,121.7" fill="#fff8be"/>
<polygon points="370.2,106.1 389.3,105.4 389.8,114.7 370.7,114.7" fill="#fff8be"/>
</g>
<g filter="url(#rag)">
<polygon points="341.8,125.4 352,125.4 352,133.4 341.8,133.4" fill="#fff8be"/>
<polygon points="467.1,130.8 490.4,130.8 489.2,151.8 468.7,151.1" fill="#fff8be"/>
</g>
<g filter="url(#cl50)">
<polygon points="388.9,89.8 412.2,88.6 412.2,111.4 389.3,111.4" fill="#006400"/>
</g>
<g filter="url(#md50)">
<polygon points="388.9,89.8 412.2,88.6 412.2,111.4 389.3,111.4" fill="#006400"/>
</g>
<g filter="url(#cl50)">
<polygon points="339.4,128.2 380,127.1 380.7,149.2 339.9,149.2" fill="#006400"/>
</g>
<g filter="url(#md50)">
<polygon points="339.4,128.2 380,127.1 380.7,149.2 339.9,149.2" fill="#006400"/>
</g>
<g filter="url(#md35)">
<polygon points="320.1,78.1 341.1,78.1 341.1,110.7 320.1,110.7" fill="#006400"/>
</g>
<g filter="url(#cl50)">
<polygon points="386.2,88.1 415.1,87.4 415.8,110 386.7,110" fill="#006400"/>
</g>
<g filter="url(#md50)">
<polygon points="386.2,86.3 450.1,83.9 450.1,110.7 386.7,110.7" fill="#006400"/>
</g>
<g filter="url(#md35)">
<polygon points="400.6,100.3 429.1,99.8 429.6,140.4 401.1,140.4" fill="#006400"/>
</g>
<g filter="url(#rag)">
<polygon points="365.7,125.4 382.5,125.4 382.5,140.4 365.7,140.4" fill="#006400"/>
</g>
<g filter="url(#md35)">
<polygon points="464.8,34.5 478,34.5 478,44.8 464.8,44.8" fill="#006400"/>
</g>
<g filter="url(#cl50)">
<polygon points="348.1,129.7 383,129.7 381.9,151.8 349.2,151.8" fill="#006400"/>
</g>
<g filter="url(#md50)">
<polygon points="348.1,129.7 383,129.7 381.9,151.8 349.2,151.8" fill="#006400"/>
</g>
<g filter="url(#md35)">
<polygon points="343.4,167 359.7,164.6 360.9,193.1 344.6,194" fill="#006400"/>
</g>
<g filter="url(#rag)">
<polygon points="365.7,129.7 382.5,129.7 382.5,146.5 365.7,146.5" fill="#006400"/>
</g>
<g filter="url(#md50)">
<polygon points="421.2,136.2 445.4,136.2 445.4,151.1 421.2,151.1" fill="#006400"/>
</g>
<g filter="url(#md20)">
<polygon points="368,132 461.3,132 461.3,162.3 368,162.3" fill="#006400"/>
</g>
<g filter="url(#rag)">
<polygon points="292.1,104.9 306.1,104.5 306.8,127.1 292.8,127.8" fill="#00ff00"/>
</g>
<g filter="url(#md50)">
<polygon points="403,100.7 429.1,100.3 429.1,139.9 403.4,139.9" fill="#00ff00"/>
<polygon points="316.6,141.3 344.6,140.2 345.7,164.6 317.8,165.8" fill="#00ff00"/>
</g>
<g filter="url(#cl50)">
<polygon points="320.1,144.8 337.6,144.1 338,160 320.8,160.4" fill="#00ff00"/>
</g>
<g filter="url(#md50)">
<polygon points="410,130.8 429.1,130.8 429.1,141.8 410.4,141.8" fill="#00ff00"/>
</g>
<g filter="url(#md35)">
<polygon points="351.1,76.5 368.4,76.5 368.4,89.1 351.1,89.1" fill="#8b4a0b"/>
<polygon points="330.1,111.4 345,111.4 345,121.7 330.1,121.7" fill="#8b4a0b"/>
<polygon points="367.4,109.1 382.3,109.1 382.3,121.7 367.4,121.7" fill="#8b4a0b"/>
</g>
<g filter="url(#sp20)">
<polygon points="386.1,64.8 401,64.8 401,79.7 386.1,79.7" fill="#8b4a0b"/>
<polygon points="368,58.3 414.6,58.3 414.6,81.6 368,81.6" fill="#8b4a0b"/>
</g>
<g filter="url(#sp10)">
<polygon points="472.9,93.3 517.2,93.3 517.2,121.2 472.9,121.2" fill="#8b4a0b"/>
<polygon points="295.6,149.2 293.3,116.6 302.6,102.6 321.3,93.3 332.9,79.3 349.2,70.4 372.6,65.7 412.2,61.1 412.2,149.2" fill="#8b4a0b"/>
</g>
<g filter="url(#rag)">
<polygon points="363.3,182.1 382,174 403,164.6 433.3,160 461.3,162.3 484.6,170.5 498.6,183.3 498.6,199.6 484.6,197.3 470.6,188 456.6,182.1 433.3,179.8 407.6,184.5 389,196.1 377.3,208.9 363.3,215.9" fill="#fff8be"/>
<polygon points="363.3,190.3 382,183.8 403,173.5 433.3,168.8 461.3,171.2 479.9,178.2 490.4,189.1 482.2,191.5 461.3,181 433.3,178.2 406.5,182.1 385.5,193.8 363.3,208.9" fill="#ffc3ab"/>
</g>
<g filter="url(#md50)">
<polygon points="403,185.2 446.1,184.5 446.8,200.1 403.4,200.1" fill="#ffa500"/>
</g>
<g filter="url(#md35)">
<polygon points="403,185.2 446.1,184.5 446.8,200.1 403.4,200.1" fill="#d4c712"/>
</g>
<g filter="url(#rag)">
<polygon points="375,199.6 414.6,198.4 415.8,225.3 405.3,243.9 375,245.1" fill="#8fa72e"/>
</g>
<g filter="url(#md50)">
<polygon points="374.5,220.1 394.1,219.4 394.1,242 374.5,242" fill="#ffa500"/>
<polygon points="393.2,206.1 408.1,205.7 408.1,237.4 393.6,237.4" fill="#00ff00"/>
</g>
<g filter="url(#cl50)">
<polygon points="396,208.9 405.3,208.9 405.3,234.6 396.4,234.6" fill="#00ff00"/>
</g>
<g filter="url(#rag)">
<polygon points="411.1,198.4 446.1,198.4 447.3,231.1 411.6,231.1" fill="#fff8be"/>
</g>
<g filter="url(#md50)">
<polygon points="414.6,201.5 443.1,201 443.1,228.8 415.1,228.8" fill="#ffc3ab"/>
</g>
<g filter="url(#rag)">
<polygon points="407.6,224.1 552.2,220.6 552.2,267.2 407.6,267.2" fill="#fff8be"/>
<polygon points="410,225.7 552.2,224.1 552.2,263.7 410.4,263.7" fill="#ffc3ab"/>
</g>
<g filter="url(#md35)">
<polygon points="410,225.7 484.6,224.8 484.6,263.7 410.4,263.7" fill="#fff8be"/>
</g>
<g filter="url(#rag)">
<polygon points="477.1,199.1 531.7,198.4 534.7,226.4 477.6,226.4" fill="#ffc3ab"/>
</g>
<g filter="url(#md50)">
<polygon points="517.2,190.3 532.4,190.3 534,208.9 518.4,208.9" fill="#fff8be"/>
</g>
<g filter="url(#rag)">
<polygon points="437.9,199.6 447.3,188 468.3,185.6 489.2,195 493.9,208.9 512.6,234.6 498.6,234.6 477.6,222.9 461.3,220.6 447.3,218.3" fill="#8fa72e"/>
</g>
<g filter="url(#md50)">
<polygon points="437.9,199.6 447.3,188 468.3,185.6 489.2,195 493.9,208.9 512.6,234.6 498.6,234.6 477.6,222.9 461.3,220.6 447.3,218.3" fill="#d4c712"/>
</g>
<g filter="url(#rag)">
<polygon points="363.3,208.9 377.3,208.9 377.3,253.2 363.3,253.2" fill="#fff8be"/>
</g>
<g filter="url(#md50)">
<polygon points="363.3,225.3 377.3,225.3 377.3,253.7 363.3,253.7" fill="#ffc3ab"/>
</g>
<g filter="url(#rag)">
<polygon points="258.3,153 304.9,136.7 325.9,160 344.6,192.6 339.9,229.9 325.9,262.6 297.9,281.2 258.3,281.2 251.3,229.9 260.6,190.3" fill="#d4c712"/>
</g>
<g filter="url(#md50)">
<polygon points="258.3,153 344.6,146 349.2,281.2 258.3,281.2" fill="#8fa72e"/>
</g>
<g filter="url(#rag)">
<polygon points="225.7,179.8 242,176.3 259.5,167 263,172.8 249,185.6 237.3,193.1 225.7,195" fill="#8b4a0b"/>
</g>
<g filter="url(#cl50b)">
<polygon points="274.6,186.8 297.9,184.5 306.1,199.6 302.6,215.9 284,217.1 273.5,204.3" fill="#8b4a0b"/>
</g>
<g filter="url(#md50)">
<polygon points="273.5,186.8 306.1,184.5 306.1,217.1 273.5,217.1" fill="#8b4a0b"/>
</g>
<g filter="url(#rag)">
<polygon points="233.8,199.6 249,198.4 250.1,215.9 235,217.1" fill="#8b4a0b"/>
</g>
<g filter="url(#md50)">
<polygon points="251.3,236.9 278.1,234.6 280.5,262.6 253.6,264.9" fill="#8b4a0b"/>
</g>
<g filter="url(#rag)">
<polygon points="256,239.3 274.6,238.1 272.3,257.9 257.1,259.1" fill="#8b4a0b"/>
<polygon points="231.5,257.9 249,256.7 250.1,278.9 231.5,278.9" fill="#8b4a0b"/>
</g>
<g filter="url(#md35)">
<polygon points="314.3,210.1 334.1,208.9 332.9,231.1 315.4,231.1" fill="#8b4a0b"/>
</g>
<g filter="url(#md50)">
<polygon points="313.1,240.4 330.6,239.7 331.1,254.4 313.8,254.4" fill="#8b4a0b"/>
</g>
<g filter="url(#sp20)">
<polygon points="228,178.6 349.2,178.6 349.2,281.2 228,281.2" fill="#8b4a0b"/>
</g>
<g filter="url(#md50)">
<polygon points="228,185.6 251.3,184.5 253.6,201.9 237.3,208.9 228,206.6" fill="#fff8be"/>
</g>
<g filter="url(#rag)">
<polygon points="273.5,130.8 283.3,130.8 282.8,143.7 274.2,143.7" fill="#fff8be"/>
<polygon points="258.3,243.9 284,241.6 286.3,281.2 256,281.2" fill="#fff8be"/>
</g>
<g filter="url(#cl50)">
<polygon points="228,220.6 253.6,218.3 260.6,241.6 251.3,262.6 228,267.2" fill="#ffa500"/>
<polygon points="258.3,132 304.9,132 297.9,157.6 263,162.3" fill="#ffa500"/>
</g>
<g filter="url(#md50)">
<polygon points="316.6,141.3 344.6,140.2 345.7,164.6 317.8,165.8" fill="#00ff00"/>
<polygon points="348.1,130.8 383,130.8 381.9,151.8 349.2,151.8" fill="#006400"/>
</g>
<g filter="url(#md35)">
<polygon points="344.6,167 358.6,164.6 359.7,192.6 345.7,193.8" fill="#006400"/>
</g>
<g filter="url(#rag)">
<polygon points="365.6,176.3 386.5,169.3 412.2,164.6 412.2,195 391.2,201.9 377.2,211.3 358.6,220.6 339.9,225.3 337.6,262.6 349.2,281.2 367.9,281.2 379.6,257.9 381.9,225.3 372.6,201.9" fill="#fff8be"/>
<polygon points="339.9,211.3 381.9,208.9 379.6,264.9 337.6,264.9" fill="#fff8be"/>
<polygon points="377.2,184.5 412.2,170.5 412.2,192.6 391.2,201.9 379.6,210.1" fill="#ffc3ab"/>
<polygon points="343.4,219.4 362.1,218.3 361.4,242.7 344.6,243.9" fill="#ffc3ab"/>
<polygon points="364.4,226.4 378.4,225.3 377.2,249.7 365.6,250.9" fill="#ffc3ab"/>
</g>
<g filter="url(#sp20)">
<polygon points="337.6,208.9 381.9,208.9 379.6,264.9 337.6,264.9" fill="#ffa500"/>
</g>
<g filter="url(#rag)">
<polygon points="377.2,210.1 412.2,206.6 412.2,248.6 391.2,246.2 377.2,241.6" fill="#8fa72e"/>
</g>
<g filter="url(#md50)">
<polygon points="391.2,208.9 412.2,207.8 412.2,235.8 392.4,235.8" fill="#00ff00"/>
</g>
<g filter="url(#rag)">
<polygon points="213.7,0 249.3,-1.8 270.7,10.7 263.5,24.9 245.7,32.1 227.9,35.6 213.7,21.4" fill="#fff8be"/>
<polygon points="176.3,90.8 199.4,85.5 217.2,92.6 213.7,106.8 192.3,110.4 178.1,103.3" fill="#fff8be"/>
</g>
<g filter="url(#md35)">
<polygon points="176.3,90.8 217.2,85.5 217.2,110.4 176.3,110.4" fill="#ffa500"/>
</g>
<g filter="url(#rag)">
<polygon points="199.4,114 227.9,110.4 231.5,119.3 203,122.9" fill="#fff8be"/>
</g>
<g filter="url(#md20)">
<polygon points="213.7,96.2 249.3,103.3 245.7,117.5 213.7,114" fill="#fff8be"/>
</g>
<g filter="url(#sp10)">
<polygon points="178.1,81.9 249.3,81.9 249.3,142.5 178.1,142.5" fill="#fff8be"/>
</g>
<g filter="url(#rag)">
<polygon points="188,117.5 194.1,116.8 195.2,122.9 188.7,123.9" fill="#8b4a0b"/>
<polygon points="220.8,192.3 242.2,178.1 263.5,170.9 276,156.7 284.9,167.4 276,185.2 263.5,199.4 249.3,210.1 235,224.4 213.7,224.4" fill="#8b4a0b"/>
</g>
<g filter="url(#md50)">
<polygon points="245.7,185.2 263.5,181.6 265.3,192.3 249.3,195.9" fill="#fff8be"/>
</g>
<g filter="url(#md35)">
<polygon points="227.9,199.4 256.4,185.2 263.5,206.6 242.2,224.4" fill="#ffa500"/>
</g>
<g filter="url(#rag)">
<polygon points="265.3,212.9 343.7,212.9 347.2,241.4 336.5,259.2 318.7,273.4 297.4,280.5 276,273.4 261.8,255.6" fill="#8fa72e"/>
</g>
<g filter="url(#md50)">
<polygon points="265.3,212.9 347.2,212.9 336.5,259.2 297.4,280.5 261.8,255.6" fill="#d4c712"/>
<polygon points="295.6,239.6 317,236 320.5,257.4 300.9,264.5" fill="#8b4a0b"/>
</g>
<g filter="url(#md20)">
<polygon points="265.3,220 347.2,220 340.1,280.5 265.3,280.5" fill="#8b4a0b"/>
</g>
<g filter="url(#cl50)">
<polygon points="276,266.3 325.9,259.2 347.2,273.4 329.4,294.8 290.2,291.2" fill="#ffa500"/>
</g>
<g filter="url(#rag)">
<polygon points="276,287.7 293.8,273.4 315.2,266.3 336.5,273.4 329.4,291.2 318.7,301.9 322.3,316.2 311.6,337.5 297.4,362.5 283.1,380.3 276,387.4 254.6,390.9 254.6,337.5 265.3,312.6" fill="#8b4a0b"/>
<polygon points="347.2,216.4 393.5,216.4 425.6,227.1 418.5,244.9 407.8,255.6 393.5,277 379.3,291.2 361.5,305.5 354.3,323.3 340.1,337.5 322.3,344.6 315.2,326.8 329.4,312.6 343.7,291.2 350.8,273.4 347.2,248.5" fill="#fff8be"/>
<polygon points="361.5,227.1 393.5,227.1 397.1,252.1 379.3,266.3 365,255.6" fill="#ffc3ab"/>
<polygon points="365,269.9 382.8,266.3 379.3,287.7 361.5,291.2" fill="#ffc3ab"/>
<polygon points="325.9,326.8 347.2,319.7 343.7,337.5 325.9,342.9" fill="#ffc3ab"/>
</g>
<g filter="url(#md20)">
<polygon points="347.2,220 418.5,220 382.8,291.2 322.3,344.6" fill="#ffc3ab"/>
</g>
<g filter="url(#rag)">
<polygon points="372.2,241.4 384.6,237.8 382.8,269.9 372.9,273.4" fill="#ffa500"/>
</g>
<g filter="url(#md50)">
<polygon points="329.4,252.1 350.8,248.5 352.6,273.4 340.1,294.8 325.9,291.2" fill="#ffa500"/>
</g>
<g filter="url(#sp20)">
<polygon points="315.2,291.2 357.9,284.1 347.2,337.5 315.2,337.5" fill="#ffa500"/>
</g>
<g filter="url(#rag)">
<polygon points="382.8,259.2 425.6,255.6 443.4,266.3 429.1,291.2 407.8,305.5 382.8,309 379.3,291.2" fill="#fff8be"/>
<polygon points="386.4,259.2 400.6,252.1 409.5,259.2 404.2,280.5 390,294.8 382.8,287.7" fill="#8fa72e"/>
</g>
<g filter="url(#md50)">
<polygon points="386.4,273.4 395.3,269.9 395.3,291.2 387.1,293" fill="#006400"/>
</g>
<g filter="url(#rag)">
<polygon points="398.9,280.5 418.5,266.3 432.7,269.9 425.6,287.7 407.8,301.9 393.5,305.5" fill="#ffc3ab"/>
<polygon points="393.5,218.2 407.8,218.2 408.5,234.2 395.3,236" fill="#00ff00"/>
</g>
<g filter="url(#md50)">
<polygon points="402.4,220 408.5,220 409.2,237.8 403.5,237.8" fill="#006400"/>
</g>
<g filter="url(#rag)">
<polygon points="468.1,260 477.8,261.6 476.8,266.2 469,264.3" fill="#8b4a0b"/>
<polygon points="483.6,260 499.1,265.8 498.2,270.7 485.5,266.8" fill="#8b4a0b"/>
<polygon points="506.9,263.9 522.5,264.9 521.5,268.2 507.9,268.2" fill="#8b4a0b"/>
<polygon points="536.1,266.8 545.8,269.7 544.8,273.2 537,269.7" fill="#8b4a0b"/>
<polygon points="450.2,268.7 452.9,269.7 443.8,285.3 441.4,284.9" fill="#8fa72e"/>
<polygon points="202.7,197.8 216.3,192 249.3,192 247.4,203.7 239.6,213.4 226,221.1 212.4,219.2 204.6,211.4" fill="#8b4a0b"/>
</g>
<g filter="url(#md35)">
<polygon points="202.7,192 249.3,192 247.4,221.1 204.6,221.1" fill="#ffa500"/>
</g>
<g filter="url(#rag)">
<polygon points="231.8,190.1 311.5,190.1 311.5,250.3 294,242.5 282.3,234.7 266.8,230.9 255.1,221.1 249.3,207.5" fill="#8fa72e"/>
</g>
<g filter="url(#md50)">
<polygon points="231.8,190.1 311.5,190.1 311.5,250.3 266.8,230.9 249.3,207.5" fill="#d4c712"/>
</g>
<g filter="url(#rag)">
<polygon points="266.8,203.7 282.3,201.7 286.2,213.4 274.6,219.2 264.9,213.4" fill="#8b4a0b"/>
<polygon points="284.3,191 301.8,191 302.7,203.7 292.1,207.5" fill="#8b4a0b"/>
</g>
<g filter="url(#md20)">
<polygon points="231.8,192 311.5,192 311.5,250.3 255.1,221.1" fill="#8b4a0b"/>
</g>
<g filter="url(#rag)">
<polygon points="183.3,209.5 196.9,207.5 202.7,221.1 222.1,225 224.1,232.8 206.6,236.7 196.9,246.4 187.1,244.5 181.3,234.7 183.3,221.1" fill="#fff8be"/>
</g>
<g filter="url(#md35)">
<polygon points="181.3,207.5 224.1,207.5 224.1,246.4 181.3,246.4" fill="#ffa500"/>
</g>
<g filter="url(#rag)">
<polygon points="181.3,252.2 196.9,248.3 212.4,256.1 224.1,256.1 222.1,273.6 208.5,279.4 196.9,277.5 193,265.8" fill="#8b4a0b"/>
</g>
<g filter="url(#md35)">
<polygon points="181.3,248.3 224.1,248.3 224.1,279.4 181.3,279.4" fill="#ffa500"/>
</g>
<g filter="url(#sp20)">
<polygon points="175.5,211.4 227.9,211.4 227.9,250.3 175.5,250.3" fill="#8b4a0b"/>
</g>
<g filter="url(#rag)">
<polygon points="243.5,246.4 259,238.6 274.6,236.7 282.3,242.5 266.8,250.3 259,265.8 251.3,277.5 243.5,273.6 247.4,260" fill="#8b4a0b"/>
<polygon points="259,250.3 266.8,244.5 282.3,240.6 294,244.5 292.1,258.1 294,269.7 286.2,277.5 274.6,285.3 266.8,293 259,300.8 249.3,300.8 243.5,293 249.3,283.3 257.1,273.6 261,261.9" fill="#fff8be"/>
</g>
<g filter="url(#sp35)">
<polygon points="266.8,265.8 276.5,263.9 274.6,279.4 266.8,281.4" fill="#ffc3ab"/>
</g>
<g filter="url(#rag)">
<polygon points="226,296.9 241.5,289.1 249.3,300.8 266.8,296.9 282.3,289.1 297.9,293 311.5,285.3 311.5,316.3 224.1,316.3" fill="#8b4a0b"/>
<polygon points="294,256.1 311.5,250.3 311.5,269.7 297.9,273.6" fill="#ffa500"/>
</g>
<g filter="url(#md50)">
<polygon points="282.3,273.6 297.9,275.5 301.8,289.1 290.1,289.1 282.3,283.3" fill="#d4c712"/>
</g>
<g filter="url(#rag)">
<polygon points="226,265.8 243.5,263.9 249.3,273.6 243.5,287.2 231.8,289.1" fill="#ffa500"/>
<polygon points="279.4,292 332.8,292 332.8,350.3 318.3,357.6 303.7,375.8 291.6,380.6 281.8,385.5 272.1,398.8 260,403.7 238.1,411 218.7,415.8 202.9,425.6 182.3,432.8 160.4,438.9 158,434.1 170.1,425.6 187.1,424.3 206.6,411 222.4,401.3 239.4,397.6 253.9,385.5 269.7,378.2 279.4,362.4 290.3,347.9 296.4,328.4 301.3,316.3 284.3,317.5 277,312.6" fill="#8b4a0b"/>
<polygon points="226,296.9 238.1,301.7 260,312.6 273.3,326 268.5,327.2 260,316.3 243,313.9 230.9,313.9" fill="#8b4a0b"/>
<polygon points="289.1,374.6 306.1,364.9 309.8,369.7 303.7,375.8 291.6,380.6 279.4,385.5" fill="#fff8be"/>
<polygon points="245.4,400.1 262.4,389.1 274.6,389.1 272.1,398.8 260,403.7 247.8,406.1 238.1,411 228.4,413.4" fill="#fff8be"/>
<polygon points="204.1,413.4 216.3,408.6 230.9,409.8 228.4,414.6 218.7,415.8 210.2,421.9 202.9,424.3" fill="#fff8be"/>
<polygon points="162.9,431.6 172.6,426.8 184.7,428 182.3,432.8 167.7,436.5" fill="#fff8be"/>
<polygon points="276.5,372.1 281.8,370.9 282.3,378.2 277,379.4" fill="#ffc3ab"/>
<polygon points="255.1,393.5 264.8,392 266.1,398.8 256.3,400.8" fill="#ffc3ab"/>
<polygon points="206.6,413.4 215.1,411 216.3,417.1 207.8,420.2" fill="#ffc3ab"/>
<polygon points="165.3,431.6 175,429.2 176.2,432.8 166.5,435.8" fill="#ffc3ab"/>
<polygon points="298.8,369.2 306.6,366.8 307.3,370.9 300.1,373.4" fill="#ffc3ab"/>
<polygon points="313.4,328.4 332.8,323.6 332.8,345.4 315.8,346.6" fill="#fff8be"/>
<polygon points="317.1,333.3 328,330.9 332.8,340.6 320.7,344.2" fill="#ffc3ab"/>
</g>
<g filter="url(#sp20)">
<polygon points="284.3,347.9 303.7,345.4 306.1,364.9 279.4,369.7" fill="#d4c712"/>
</g>
<g filter="url(#md35)">
<polygon points="228.4,292 279.4,292 274.6,311.4 230.9,311.4" fill="#ffa500"/>
</g>
<g filter="url(#md50)">
<polygon points="255.1,292 279.4,292 274.6,304.1 260,306.6" fill="#fff8be"/>
</g>
<g filter="url(#rag)">
<polygon points="329.1,305.9 344.6,303.9 356.3,315.6 356.3,321.4 348.5,329.2 344.6,337 329.1,345.7 317.4,340.9 319.4,331.1 331,321.4" fill="#fff8be"/>
<polygon points="321.3,335 342.7,327.3 345.6,333.1 333,340.9 321.3,342.8" fill="#ffc3ab"/>
<polygon points="347.5,315.6 356.3,316.6 355.9,323.4 348.5,325.3" fill="#ffc3ab"/>
<polygon points="298,360.3 307.7,358.3 308.7,371.9 298,375.8" fill="#fff8be"/>
<polygon points="298,367.1 306.7,367.1 306.7,372.9 298,374.3" fill="#ffc3ab"/>
</g>
</g>
<g filter="url(#rag2)">
<polygon points="256.4,71.9 269,72.9 275.8,81.6 279.7,85.5 276.8,88.4 269,86.5 263.2,83.5 259.3,77.7" fill="#6fb1dd"/>
<polygon points="318.4,298.7 327.1,295.8 338.8,292.9 344.6,290 346.6,292.9 339.8,296.8 329.1,299.7 325.2,304.6 318.4,303.6" fill="#6fb1dd"/>
<polygon points="441.8,254.2 450.6,250.3 455.4,248.3 458.3,252.2 464.2,256.1 466.1,261 460.3,266.8 454.5,269.3 448.6,269.7 443.8,277.5 440.9,283.3 438.9,282.3 437,277.5 435.4,269.7 432.1,261 434.1,257.7 437.9,257.1" fill="#6fb1dd"/>
<polygon points="433.1,244.5 437,243.5 436,256.1 433.1,257.1" fill="#6fb1dd"/>
<polygon points="451.5,268.7 449.6,271.7 445.7,279.4 447.7,280.4 452.9,271.7" fill="#6fb1dd"/>
<polygon points="303.7,343.5 313.4,341.8 317.1,346.6 309.8,350.3 303.7,348.3" fill="#6fb1dd"/>
<polygon points="298,313.3 301.5,314.9 301.9,323 298,324" fill="#6fb1dd"/>
<polygon points="301.9,343.8 309.7,342.8 311.6,347.7 303.8,349.6" fill="#6fb1dd"/>
<polygon points="113.2,140.7 117.5,144.2 122.9,147.8 128.2,146.7 133.5,149.6 140.7,158.5 150.3,163.1 147.8,167.4 140.7,165.6 135.3,170.9 130,162 124.6,154.9 115.7,153.8 111.1,148.9" fill="#fff8be"/>
<polygon points="148.9,259.9 162,256.7 172.7,258.5 175.2,269.9 167.4,275.2 158.5,269.9 151.4,264.5" fill="#ffa500"/>
<polygon points="372.8,326.3 379.6,336 374.7,340.9 372.8,348.6 375.7,358.3 369.9,364.2 362.1,370 354.3,374.9 348.5,381.7 344.6,377.8 339.8,374.9 336.9,366.1 338.8,358.3 346.6,356.4 350.5,349.6 356.3,348.6 360.2,340.9 366,334.1 369.9,328.2" fill="#8b4a0b"/>
<polygon points="342.3,387.5 347.5,387.1 348.1,389.8 342.7,389.8" fill="#8b4a0b"/>
<polygon points="335.3,390.4 338.8,389 337.8,392.3 335.3,392.9" fill="#8b4a0b"/>
<polygon points="319,409.2 321.3,409.2 321.3,411.8 319,411.8" fill="#8b4a0b"/>
<polygon points="232.1,168.5 236.4,168.5 236.4,171 232.1,171" fill="#ffa500"/>
<polygon points="70.5,227.1 73.4,227.8 76.6,234.2 81.2,238.5 79.1,239.2 74.1,235.7" fill="#fff8be"/>
<polygon points="84,336.1 87.6,336.1 87.6,338.6 84,338.6" fill="#ffa500"/>
<polygon points="90.5,356.8 93.3,356.8 93.3,359.2 90.5,359.2" fill="#8b4a0b"/>
<polygon points="230.9,418.3 236.9,419.5 235.7,424.3 230.9,423.1" fill="#8b4a0b"/>
<polygon points="201.7,428 205.4,427.5 205.4,430.9 202.2,430.9" fill="#8b4a0b"/>
<polygon points="318.3,409 320.7,409 320.7,412 318.3,412" fill="#8b4a0b"/>
<polygon points="221.6,316.8 230.9,315.8 230.9,319.2 224.8,319.9" fill="#8b4a0b"/>
<polygon points="238.1,316.3 243,317.5 240.6,322.4 237.7,321.1" fill="#8b4a0b"/>
<polygon points="350.5,352.5 360.2,349.6 368.9,350.6 372.8,356.4 366,364.2 356.3,370 350.5,366.1" fill="#fff8be"/>
<polygon points="367,329.2 372.8,326.9 378,336 372.8,340.9 366.4,337.4" fill="#006400"/>
<polygon points="360.2,340.9 366,337.9 372.8,341.8 371.8,348.6 362.1,349.6" fill="#d4c712"/>
<polygon points="356.3,358.3 364.1,356.4 363.1,362.2 356.3,364.2" fill="#ffc3ab"/>
<polygon points="137.1,161 144.2,162 142.5,163.8 137.1,163.1" fill="#ffa500"/>
<polygon points="115.7,146 120.4,146.7 119.7,149.6 115.7,148.9" fill="#ffa500"/>
<polygon points="149.6,260.2 160.3,257.7 162,262.7 153.1,264.5" fill="#fff8be"/>
</g>
</svg><!--MAPEND-->
</div>
<div class="num" style="left:740px;top:467px;width:24px;height:24px;font-size:20px;line-height:24px">4</div>

<!-- status bar -->
<div class="st" style="left:33px;top:594px">Coordinate:</div>
<div class="abs" style="left:122px;top:594px;width:294px;height:18px;border:1px solid #aaa7a2;border-radius:3px;background:#fff;text-align:center;font-size:15px;line-height:17px;color:#3c3c3c">-532414,7099939</div>
<div class="num" style="left:399px;top:589px;width:24px;height:24px;font-size:20px;line-height:24px">5</div>
<div class="st" style="left:430px;top:594px;letter-spacing:-0.5px">Scale</div>
<div class="abs" style="left:478px;top:594px;width:97px;height:18px;border:1px solid #aaa7a2;border-radius:3px;background:#fff;overflow:hidden"><span class="abs" style="left:-4px;top:1px;font-size:15px;line-height:17px;letter-spacing:.1px">4.000.000</span><span class="abs" style="left:71px;top:0;width:24px;height:16px;background:#f4f3f2;border-left:1px solid #c9c6c1"></span><span class="abs" style="left:79.500px;top:6px;border:4px solid transparent;border-top:5px solid #707070;border-bottom:none"></span></div>
<div class="abs" style="left:586px;top:596px;width:15px;height:15px;border:1px solid #c8511f;border-radius:3px;background:linear-gradient(#f79b76,#ee7447)"><svg width="13" height="13" viewBox="0 0 13 13" style="position:absolute;left:0;top:0"><path d="M2.500 6l3 4.500 5.500-9" fill="none" stroke="#5a2a16" stroke-width="2"/></svg></div>
<svg class="abs" style="left:755px;top:594px" width="18" height="18" viewBox="0 0 18 18"><rect x=".5" y=".5" width="17" height="17" rx="3" fill="#e9e7e4" stroke="#aaa7a2"/><circle cx="9" cy="9" r="6" fill="#2a2a2a"/><ellipse cx="9" cy="9" rx="2.600" ry="6" fill="none" stroke="#eee" stroke-width=".9"/><path d="M3 9h12M4 5.500h10M4 12.500h10" stroke="#eee" stroke-width=".9"/><path d="M9 1v3M9 14v3M1 9h3M14 9h3" stroke="#2a2a2a" stroke-width="1.300"/></svg>
<svg class="abs" style="left:781px;top:594px" width="18" height="18" viewBox="0 0 18 18"><rect x=".5" y=".5" width="17" height="17" rx="3" fill="#f1efec" stroke="#aaa7a2"/><path d="M9 3l6 11.500h-12z" fill="#f7f0a8" stroke="#555" stroke-width="1"/><path d="M9 7v4" stroke="#222" stroke-width="1.500"/><circle cx="9" cy="12.700" r=".9" fill="#222"/></svg>
<svg class="abs" style="left:4px;top:594px" width="19" height="19" viewBox="0 0 19 19"><rect x=".5" y=".5" width="17" height="17" rx="3" fill="#ebe9e6" stroke="#aaa7a2"/><circle cx="8" cy="6.500" r="3.200" fill="none" stroke="#222" stroke-width="1.500"/><circle cx="9.500" cy="12" r="3.200" fill="none" stroke="#222" stroke-width="1.500"/><path d="M12 3l3-1.500M13 6h2.500M4 15l-2 1.500" stroke="#222" stroke-width="1"/></svg>
<svg class="abs" style="left:808px;top:602px" width="14" height="14" viewBox="0 0 14 14"><g fill="#c4c1bc"><rect x="10" y="2" width="2" height="2"/><rect x="6" y="6" width="2" height="2"/><rect x="10" y="6" width="2" height="2"/><rect x="2" y="10" width="2" height="2"/><rect x="6" y="10" width="2" height="2"/><rect x="10" y="10" width="2" height="2"/></g></svg>
<div class="st" style="left:608.500px;top:594px;letter-spacing:-0.3px">Render</div>
<div class="st" style="left:673px;top:594px;letter-spacing:-0.9px">EPSG:2964</div>
</body></html>
